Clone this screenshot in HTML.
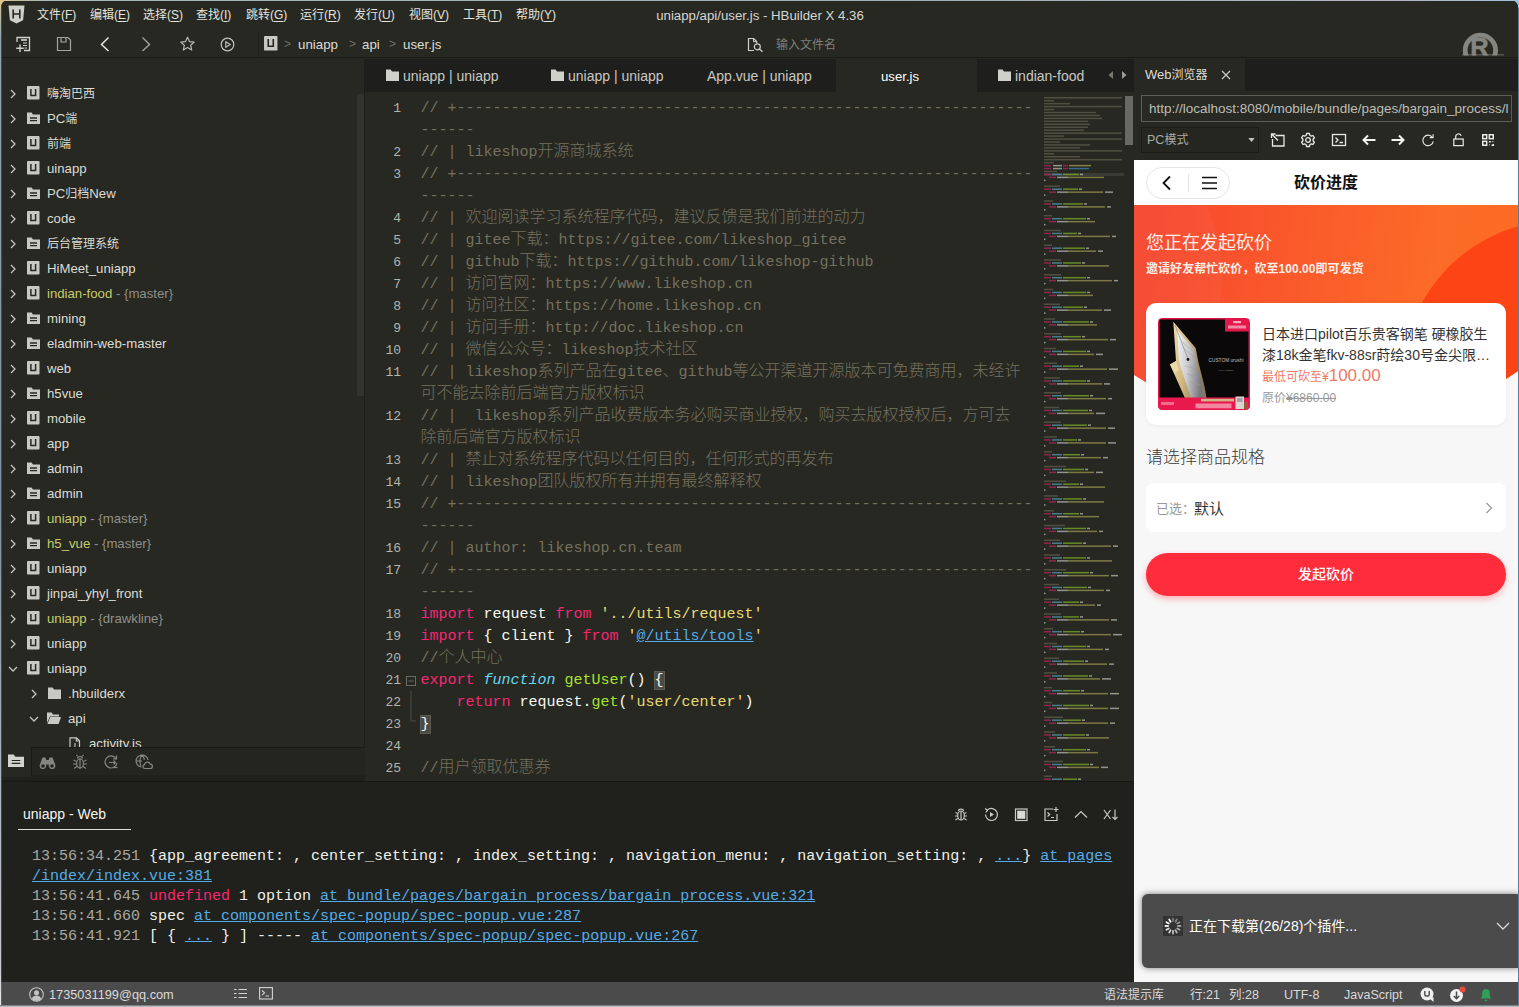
<!DOCTYPE html>
<html lang="zh-CN"><head><meta charset="utf-8"><title>uniapp/api/user.js - HBuilder X 4.36</title>
<style>
*{box-sizing:border-box;margin:0;padding:0}
html,body{width:1519px;height:1007px;overflow:hidden;background:#272822}
body{position:relative;font-family:"Liberation Sans","Noto Sans CJK SC",sans-serif;color:#e0e0da;font-size:13px}
.abs{position:absolute}
svg{display:block}
/* menubar */
#menubar{position:absolute;left:0;top:0;width:1519px;height:30px;background:#272822}
#menubar .mi{position:absolute;top:7px;height:17px;line-height:17px;font-size:12px;color:#e4e4de;white-space:nowrap}
#menubar .mi u{text-decoration:underline;text-underline-offset:2px}
#title{position:absolute;top:7px;left:560px;width:400px;text-align:center;font-size:13.25px;line-height:17px;color:#d6d6d0;white-space:nowrap}
/* toolbar */
#toolbar{position:absolute;left:0;top:30px;width:1519px;height:28px;background:#272822;border-bottom:1px solid #1a1b17}
#toolbar .ic{position:absolute;top:5px}
.crumb{position:absolute;top:6px;font-size:13.3px;line-height:17px;color:#dcdcd6;white-space:nowrap}
.crumb.sep{color:#6e6f68;font-size:12px}
/* sidebar */
#sidebar{position:absolute;left:0;top:59px;width:365px;height:723px;background:#272822;overflow:hidden}
.row{position:absolute;left:0;width:357px;height:25px;line-height:25px;font-size:13.2px;color:#dcdcd4;white-space:nowrap}
.row .ar{position:absolute;top:7px}
.row .icn{position:absolute;top:6px}
.row .tx{position:absolute;top:0}
.row .git{color:#c7cb6a}
.z12{font-size:12px}
.row .br{color:#8f908a}
#sbscroll{position:absolute;left:357px;top:35px;width:7px;height:302px;background:#32332e}
#sbbar{position:absolute;left:0;top:688px;width:365px;height:34px;background:#20211d}
#sbbar .in{position:absolute;left:31px;top:0;width:334px;height:28px;background:#242520;border-top:1px solid #191a16;border-left:1px solid #191a16}
/* editor */
#tabs{position:absolute;left:365px;top:59px;width:769px;height:33px;background:#1e1f1c}
.tab{position:absolute;top:1px;height:33px;line-height:33px;font-size:14px;color:#c8c8c2;white-space:nowrap}
#editor{position:absolute;left:365px;top:92px;width:769px;height:689px;background:#272822;overflow:hidden}
.ln{position:absolute;left:0;width:36px;text-align:right;height:22px;font:13px/22px "Liberation Mono",monospace;color:#b4b4ac}
.cl{position:absolute;left:55.5px;height:22px;line-height:22px;font:15px/22px "Liberation Mono","Noto Sans CJK SC",monospace;color:#f8f8f2;white-space:pre}
.cl .z{line-height:0;font-size:16px;font-family:"Noto Sans CJK SC",sans-serif;font-weight:300}
.c{color:#75715e}.k{color:#f92672}.s{color:#e6db74}.f{color:#a6e22e}.t{color:#66d9ef;font-style:italic}
.lk{color:#55ace6;text-decoration:underline}
.bm{background:#4a4b45;outline:1px solid #5a5b55}
/* console */
#console{position:absolute;left:0;top:781px;width:1134px;height:201px;background:#20211d;border-top:1px solid #171814}
.log{position:absolute;left:32px;height:20px;font:15px/20px "Liberation Mono",monospace;color:#f0f0ea;white-space:pre}
.log .tm{color:#a8a8a2}
.log a{color:#55ace6;text-decoration:underline}
.log .u{color:#f92672}
/* status */
#status{position:absolute;left:0;top:982px;width:1519px;height:25px;background:#4b4b4b;color:#dadada;font-size:13px}
#status span{position:absolute;top:5px;line-height:17px;white-space:nowrap}
/* browser */
#browser{position:absolute;left:1134px;top:59px;width:385px;height:923px;background:#272822}
#btabs{position:absolute;left:0;top:0;width:385px;height:32px;background:#1e1f1c}
#web{position:absolute;left:0;top:101px;width:384px;height:822px;background:#f7f7f7;overflow:hidden;font-family:"Liberation Sans","Noto Sans CJK SC",sans-serif}
</style></head><body>
<div id="menubar"><svg class="abs" style="left:8px;top:5px" width="17" height="19" viewBox="0 0 17 19"><path d="M0.5 0.5h16l-1.4 14.8L8.5 18.5 1.9 15.3z" fill="#cfcfc9"/><path d="M5.2 4.5v9M11.8 4.5v9M5.2 9h6.6" stroke="#272822" stroke-width="1.6" fill="none"/></svg><span class="mi" style="left:37px">文件(<u>F</u>)</span><span class="mi" style="left:90px">编辑(<u>E</u>)</span><span class="mi" style="left:143px">选择(<u>S</u>)</span><span class="mi" style="left:196px">查找(<u>I</u>)</span><span class="mi" style="left:246px">跳转(<u>G</u>)</span><span class="mi" style="left:300px">运行(<u>R</u>)</span><span class="mi" style="left:354px">发行(<u>U</u>)</span><span class="mi" style="left:409px">视图(<u>V</u>)</span><span class="mi" style="left:463px">工具(<u>T</u>)</span><span class="mi" style="left:516px">帮助(<u>Y</u>)</span><div id="title">uniapp/api/user.js - HBuilder X 4.36</div></div>
<div id="toolbar"><svg class="ic" style="left:14px" width="18" height="18" viewBox="0 0 18 18" fill="none" stroke="#d0d0ca" stroke-width="1.3"><path d="M3 7V2.500h12.500v13H10"/><path d="M7 5h6" stroke-width="1.700"/><path d="M9 8h4M9 10.500h4M10.500 13h2.500" stroke-width="1"/><path d="M6 9.500v7.500M2.200 13.200h7.600" stroke-width="1.400"/></svg><svg class="ic" style="left:56px" width="16" height="18" viewBox="0 0 16 18" fill="none" stroke="#a5a6a0" stroke-width="1.2"><path d="M1.5 2.5h10.5l2.5 2.5v10.5h-13z"/><path d="M5 2.5v4.5h5v-4.5"/></svg><svg class="ic" style="left:99px" width="12" height="18" viewBox="0 0 12 18" fill="none" stroke="#e4e4de" stroke-width="1.5"><path d="M9.5 2.5L2.5 9.5l7 6.5"/></svg><svg class="ic" style="left:140px" width="12" height="18" viewBox="0 0 12 18" fill="none" stroke="#a3a49e" stroke-width="1.4"><path d="M2.5 2.5L9.5 9.5l-7 6.5"/></svg><svg class="ic" style="left:179px" width="17" height="18" viewBox="0 0 17 18" fill="none" stroke="#b9b9b3" stroke-width="1.2" stroke-linejoin="round"><path d="M8.5 2.2l2 4.4 4.7.5-3.5 3.2 1 4.7-4.2-2.4-4.2 2.4 1-4.7L1.8 7.1l4.7-.5z"/></svg><svg class="ic" style="left:219px" width="17" height="18" viewBox="0 0 17 18" fill="none" stroke="#c4c4be" stroke-width="1.2"><circle cx="8.5" cy="9.5" r="6.3"/><path d="M6.8 6.8v5.4l4.4-2.7z" stroke-width="1.1"/></svg><div class="abs" style="left:258px;top:1px;width:1px;height:26px;background:#1e1f1b"></div><svg class="abs" style="left:264px;top:6px" width="13.5" height="14.5" viewBox="0 0 12.500 13.500"><rect x="0" y="0" width="12.500" height="13.500" rx=".8" fill="#c9c9c3"/><path d="M3.900 2.900v6.600h4.700V2.900" fill="none" stroke="#272822" stroke-width="1.500"/></svg><span class="crumb sep" style="left:284px">&gt;</span><span class="crumb" style="left:298px">uniapp</span><span class="crumb sep" style="left:349px">&gt;</span><span class="crumb" style="left:362px">api</span><span class="crumb sep" style="left:389px">&gt;</span><span class="crumb" style="left:403px">user.js</span><svg class="abs" style="left:747px;top:7px" width="17" height="17" viewBox="0 0 17 17" fill="none" stroke="#d2d2cc" stroke-width="1.200"><path d="M7 13.500H1.500V1.500h5.200l3 3v1.800"/><path d="M6.500 1.500v3.200h3.200" stroke-width="1"/><circle cx="10.300" cy="9.800" r="3"/><path d="M12.500 12l3 2.800"/></svg><span class="crumb" style="left:776px;top:7px;color:#7f807a;font-size:12px">输入文件名</span><svg class="abs" style="left:1460px;top:0" width="48" height="26" viewBox="0 0 48 26"><defs><clipPath id="rc"><rect x="0" y="0" width="48" height="25.500"/></clipPath></defs><g clip-path="url(#rc)"><circle cx="20.400" cy="20.400" r="15.200" fill="none" stroke="#868681" stroke-width="4.800"/><text x="10.200" y="25.500" font-family="Liberation Sans,sans-serif" font-weight="bold" font-size="25.500" fill="#868681" stroke="#868681" stroke-width=".6">R</text><rect x="2" y="24.500" width="42" height="1" fill="#868681"/></g></svg></div>
<div id="sidebar"><div class="row" style="top:22px"><svg class="ar" style="left:8px;top:8px" width="10" height="10" viewBox="0 0 10 10" fill="none" stroke="#c4c4be" stroke-width="1.3"><path d="M3 1l4 4-4 4"/></svg><svg class="icn" style="left:27px;top:5px" width="12.5" height="13.5" viewBox="0 0 12.500 13.500"><rect x="0" y="0" width="12.500" height="13.500" rx=".8" fill="#c9c9c3"/><path d="M3.900 2.900v6.600h4.700V2.900" fill="none" stroke="#272822" stroke-width="1.500"/></svg><span class="tx" style="left:47px"><span class="z12">嗨淘巴西</span></span></div><div class="row" style="top:47px"><svg class="ar" style="left:8px;top:8px" width="10" height="10" viewBox="0 0 10 10" fill="none" stroke="#c4c4be" stroke-width="1.3"><path d="M3 1l4 4-4 4"/></svg><svg class="icn" style="left:27px;top:6px" width="13" height="12" viewBox="0 0 13 12"><path d="M0 0.5h4.6l1.4 2H13V12H0z" fill="#c9c9c3"/><path d="M3 6h7M3 8.7h7" stroke="#272822" stroke-width="1.3"/></svg><span class="tx" style="left:47px">PC<span class="z12">端</span></span></div><div class="row" style="top:72px"><svg class="ar" style="left:8px;top:8px" width="10" height="10" viewBox="0 0 10 10" fill="none" stroke="#c4c4be" stroke-width="1.3"><path d="M3 1l4 4-4 4"/></svg><svg class="icn" style="left:27px;top:5px" width="12.5" height="13.5" viewBox="0 0 12.500 13.500"><rect x="0" y="0" width="12.500" height="13.500" rx=".8" fill="#c9c9c3"/><path d="M3.900 2.900v6.600h4.700V2.900" fill="none" stroke="#272822" stroke-width="1.500"/></svg><span class="tx" style="left:47px"><span class="z12">前端</span></span></div><div class="row" style="top:97px"><svg class="ar" style="left:8px;top:8px" width="10" height="10" viewBox="0 0 10 10" fill="none" stroke="#c4c4be" stroke-width="1.3"><path d="M3 1l4 4-4 4"/></svg><svg class="icn" style="left:27px;top:5px" width="12.5" height="13.5" viewBox="0 0 12.500 13.500"><rect x="0" y="0" width="12.500" height="13.500" rx=".8" fill="#c9c9c3"/><path d="M3.900 2.900v6.600h4.700V2.900" fill="none" stroke="#272822" stroke-width="1.500"/></svg><span class="tx" style="left:47px">uinapp</span></div><div class="row" style="top:122px"><svg class="ar" style="left:8px;top:8px" width="10" height="10" viewBox="0 0 10 10" fill="none" stroke="#c4c4be" stroke-width="1.3"><path d="M3 1l4 4-4 4"/></svg><svg class="icn" style="left:27px;top:6px" width="13" height="12" viewBox="0 0 13 12"><path d="M0 0.5h4.6l1.4 2H13V12H0z" fill="#c9c9c3"/><path d="M3 6h7M3 8.7h7" stroke="#272822" stroke-width="1.3"/></svg><span class="tx" style="left:47px">PC<span class="z12">归档</span>New</span></div><div class="row" style="top:147px"><svg class="ar" style="left:8px;top:8px" width="10" height="10" viewBox="0 0 10 10" fill="none" stroke="#c4c4be" stroke-width="1.3"><path d="M3 1l4 4-4 4"/></svg><svg class="icn" style="left:27px;top:5px" width="12.5" height="13.5" viewBox="0 0 12.500 13.500"><rect x="0" y="0" width="12.500" height="13.500" rx=".8" fill="#c9c9c3"/><path d="M3.900 2.900v6.600h4.700V2.900" fill="none" stroke="#272822" stroke-width="1.500"/></svg><span class="tx" style="left:47px">code</span></div><div class="row" style="top:172px"><svg class="ar" style="left:8px;top:8px" width="10" height="10" viewBox="0 0 10 10" fill="none" stroke="#c4c4be" stroke-width="1.3"><path d="M3 1l4 4-4 4"/></svg><svg class="icn" style="left:27px;top:6px" width="13" height="12" viewBox="0 0 13 12"><path d="M0 0.5h4.6l1.4 2H13V12H0z" fill="#c9c9c3"/><path d="M3 6h7M3 8.7h7" stroke="#272822" stroke-width="1.3"/></svg><span class="tx" style="left:47px"><span class="z12">后台管理系统</span></span></div><div class="row" style="top:197px"><svg class="ar" style="left:8px;top:8px" width="10" height="10" viewBox="0 0 10 10" fill="none" stroke="#c4c4be" stroke-width="1.3"><path d="M3 1l4 4-4 4"/></svg><svg class="icn" style="left:27px;top:5px" width="12.5" height="13.5" viewBox="0 0 12.500 13.500"><rect x="0" y="0" width="12.500" height="13.500" rx=".8" fill="#c9c9c3"/><path d="M3.900 2.900v6.600h4.700V2.900" fill="none" stroke="#272822" stroke-width="1.500"/></svg><span class="tx" style="left:47px">HiMeet_uniapp</span></div><div class="row" style="top:222px"><svg class="ar" style="left:8px;top:8px" width="10" height="10" viewBox="0 0 10 10" fill="none" stroke="#c4c4be" stroke-width="1.3"><path d="M3 1l4 4-4 4"/></svg><svg class="icn" style="left:27px;top:5px" width="12.5" height="13.5" viewBox="0 0 12.500 13.500"><rect x="0" y="0" width="12.500" height="13.500" rx=".8" fill="#c9c9c3"/><path d="M3.900 2.900v6.600h4.700V2.900" fill="none" stroke="#272822" stroke-width="1.500"/></svg><span class="tx" style="left:47px"><span class="git">indian-food</span><span class="br"> - {master}</span></span></div><div class="row" style="top:247px"><svg class="ar" style="left:8px;top:8px" width="10" height="10" viewBox="0 0 10 10" fill="none" stroke="#c4c4be" stroke-width="1.3"><path d="M3 1l4 4-4 4"/></svg><svg class="icn" style="left:27px;top:6px" width="13" height="12" viewBox="0 0 13 12"><path d="M0 0.5h4.6l1.4 2H13V12H0z" fill="#c9c9c3"/><path d="M3 6h7M3 8.7h7" stroke="#272822" stroke-width="1.3"/></svg><span class="tx" style="left:47px">mining</span></div><div class="row" style="top:272px"><svg class="ar" style="left:8px;top:8px" width="10" height="10" viewBox="0 0 10 10" fill="none" stroke="#c4c4be" stroke-width="1.3"><path d="M3 1l4 4-4 4"/></svg><svg class="icn" style="left:27px;top:6px" width="13" height="12" viewBox="0 0 13 12"><path d="M0 0.5h4.6l1.4 2H13V12H0z" fill="#c9c9c3"/><path d="M3 6h7M3 8.7h7" stroke="#272822" stroke-width="1.3"/></svg><span class="tx" style="left:47px">eladmin-web-master</span></div><div class="row" style="top:297px"><svg class="ar" style="left:8px;top:8px" width="10" height="10" viewBox="0 0 10 10" fill="none" stroke="#c4c4be" stroke-width="1.3"><path d="M3 1l4 4-4 4"/></svg><svg class="icn" style="left:27px;top:5px" width="12.5" height="13.5" viewBox="0 0 12.500 13.500"><rect x="0" y="0" width="12.500" height="13.500" rx=".8" fill="#c9c9c3"/><path d="M3.900 2.900v6.600h4.700V2.900" fill="none" stroke="#272822" stroke-width="1.500"/></svg><span class="tx" style="left:47px">web</span></div><div class="row" style="top:322px"><svg class="ar" style="left:8px;top:8px" width="10" height="10" viewBox="0 0 10 10" fill="none" stroke="#c4c4be" stroke-width="1.3"><path d="M3 1l4 4-4 4"/></svg><svg class="icn" style="left:27px;top:6px" width="13" height="12" viewBox="0 0 13 12"><path d="M0 0.5h4.6l1.4 2H13V12H0z" fill="#c9c9c3"/><path d="M3 6h7M3 8.7h7" stroke="#272822" stroke-width="1.3"/></svg><span class="tx" style="left:47px">h5vue</span></div><div class="row" style="top:347px"><svg class="ar" style="left:8px;top:8px" width="10" height="10" viewBox="0 0 10 10" fill="none" stroke="#c4c4be" stroke-width="1.3"><path d="M3 1l4 4-4 4"/></svg><svg class="icn" style="left:27px;top:5px" width="12.5" height="13.5" viewBox="0 0 12.500 13.500"><rect x="0" y="0" width="12.500" height="13.500" rx=".8" fill="#c9c9c3"/><path d="M3.900 2.900v6.600h4.700V2.900" fill="none" stroke="#272822" stroke-width="1.500"/></svg><span class="tx" style="left:47px">mobile</span></div><div class="row" style="top:372px"><svg class="ar" style="left:8px;top:8px" width="10" height="10" viewBox="0 0 10 10" fill="none" stroke="#c4c4be" stroke-width="1.3"><path d="M3 1l4 4-4 4"/></svg><svg class="icn" style="left:27px;top:5px" width="12.5" height="13.5" viewBox="0 0 12.500 13.500"><rect x="0" y="0" width="12.500" height="13.500" rx=".8" fill="#c9c9c3"/><path d="M3.900 2.900v6.600h4.700V2.900" fill="none" stroke="#272822" stroke-width="1.500"/></svg><span class="tx" style="left:47px">app</span></div><div class="row" style="top:397px"><svg class="ar" style="left:8px;top:8px" width="10" height="10" viewBox="0 0 10 10" fill="none" stroke="#c4c4be" stroke-width="1.3"><path d="M3 1l4 4-4 4"/></svg><svg class="icn" style="left:27px;top:6px" width="13" height="12" viewBox="0 0 13 12"><path d="M0 0.5h4.6l1.4 2H13V12H0z" fill="#c9c9c3"/><path d="M3 6h7M3 8.7h7" stroke="#272822" stroke-width="1.3"/></svg><span class="tx" style="left:47px">admin</span></div><div class="row" style="top:422px"><svg class="ar" style="left:8px;top:8px" width="10" height="10" viewBox="0 0 10 10" fill="none" stroke="#c4c4be" stroke-width="1.3"><path d="M3 1l4 4-4 4"/></svg><svg class="icn" style="left:27px;top:6px" width="13" height="12" viewBox="0 0 13 12"><path d="M0 0.5h4.6l1.4 2H13V12H0z" fill="#c9c9c3"/><path d="M3 6h7M3 8.7h7" stroke="#272822" stroke-width="1.3"/></svg><span class="tx" style="left:47px">admin</span></div><div class="row" style="top:447px"><svg class="ar" style="left:8px;top:8px" width="10" height="10" viewBox="0 0 10 10" fill="none" stroke="#c4c4be" stroke-width="1.3"><path d="M3 1l4 4-4 4"/></svg><svg class="icn" style="left:27px;top:5px" width="12.5" height="13.5" viewBox="0 0 12.500 13.500"><rect x="0" y="0" width="12.500" height="13.500" rx=".8" fill="#c9c9c3"/><path d="M3.900 2.900v6.600h4.700V2.900" fill="none" stroke="#272822" stroke-width="1.500"/></svg><span class="tx" style="left:47px"><span class="git">uniapp</span><span class="br"> - {master}</span></span></div><div class="row" style="top:472px"><svg class="ar" style="left:8px;top:8px" width="10" height="10" viewBox="0 0 10 10" fill="none" stroke="#c4c4be" stroke-width="1.3"><path d="M3 1l4 4-4 4"/></svg><svg class="icn" style="left:27px;top:6px" width="13" height="12" viewBox="0 0 13 12"><path d="M0 0.5h4.6l1.4 2H13V12H0z" fill="#c9c9c3"/><path d="M3 6h7M3 8.7h7" stroke="#272822" stroke-width="1.3"/></svg><span class="tx" style="left:47px"><span class="git">h5_vue</span><span class="br"> - {master}</span></span></div><div class="row" style="top:497px"><svg class="ar" style="left:8px;top:8px" width="10" height="10" viewBox="0 0 10 10" fill="none" stroke="#c4c4be" stroke-width="1.3"><path d="M3 1l4 4-4 4"/></svg><svg class="icn" style="left:27px;top:5px" width="12.5" height="13.5" viewBox="0 0 12.500 13.500"><rect x="0" y="0" width="12.500" height="13.500" rx=".8" fill="#c9c9c3"/><path d="M3.900 2.900v6.600h4.700V2.900" fill="none" stroke="#272822" stroke-width="1.500"/></svg><span class="tx" style="left:47px">uniapp</span></div><div class="row" style="top:522px"><svg class="ar" style="left:8px;top:8px" width="10" height="10" viewBox="0 0 10 10" fill="none" stroke="#c4c4be" stroke-width="1.3"><path d="M3 1l4 4-4 4"/></svg><svg class="icn" style="left:27px;top:5px" width="12.5" height="13.5" viewBox="0 0 12.500 13.500"><rect x="0" y="0" width="12.500" height="13.500" rx=".8" fill="#c9c9c3"/><path d="M3.900 2.900v6.600h4.700V2.900" fill="none" stroke="#272822" stroke-width="1.500"/></svg><span class="tx" style="left:47px">jinpai_yhyl_front</span></div><div class="row" style="top:547px"><svg class="ar" style="left:8px;top:8px" width="10" height="10" viewBox="0 0 10 10" fill="none" stroke="#c4c4be" stroke-width="1.3"><path d="M3 1l4 4-4 4"/></svg><svg class="icn" style="left:27px;top:5px" width="12.5" height="13.5" viewBox="0 0 12.500 13.500"><rect x="0" y="0" width="12.500" height="13.500" rx=".8" fill="#c9c9c3"/><path d="M3.900 2.900v6.600h4.700V2.900" fill="none" stroke="#272822" stroke-width="1.500"/></svg><span class="tx" style="left:47px"><span class="git">uniapp</span><span class="br"> - {drawkline}</span></span></div><div class="row" style="top:572px"><svg class="ar" style="left:8px;top:8px" width="10" height="10" viewBox="0 0 10 10" fill="none" stroke="#c4c4be" stroke-width="1.3"><path d="M3 1l4 4-4 4"/></svg><svg class="icn" style="left:27px;top:5px" width="12.5" height="13.5" viewBox="0 0 12.500 13.500"><rect x="0" y="0" width="12.500" height="13.500" rx=".8" fill="#c9c9c3"/><path d="M3.900 2.900v6.600h4.700V2.900" fill="none" stroke="#272822" stroke-width="1.500"/></svg><span class="tx" style="left:47px">uniapp</span></div><div class="row" style="top:597px"><svg class="ar" style="left:8px;top:8px" width="10" height="10" viewBox="0 0 10 10" fill="none" stroke="#c4c4be" stroke-width="1.3"><path d="M1 3l4 4 4-4"/></svg><svg class="icn" style="left:27px;top:5px" width="12.5" height="13.5" viewBox="0 0 12.500 13.500"><rect x="0" y="0" width="12.500" height="13.500" rx=".8" fill="#c9c9c3"/><path d="M3.900 2.900v6.600h4.700V2.900" fill="none" stroke="#272822" stroke-width="1.500"/></svg><span class="tx" style="left:47px">uniapp</span></div><div class="row" style="top:622px"><svg class="ar" style="left:29px;top:8px" width="10" height="10" viewBox="0 0 10 10" fill="none" stroke="#c4c4be" stroke-width="1.3"><path d="M3 1l4 4-4 4"/></svg><svg class="icn" style="left:48px;top:6px" width="13" height="12" viewBox="0 0 13 12"><path d="M0 0.5h4.6l1.4 2H13V12H0z" fill="#c9c9c3"/></svg><span class="tx" style="left:68px">.hbuilderx</span></div><div class="row" style="top:647px"><svg class="ar" style="left:29px;top:8px" width="10" height="10" viewBox="0 0 10 10" fill="none" stroke="#c4c4be" stroke-width="1.3"><path d="M1 3l4 4 4-4"/></svg><svg class="icn" style="left:47px;top:6px" width="14" height="12" viewBox="0 0 14 12"><path d="M0 11V0.5h4.6l1.4 2H12v2H3z" fill="#c9c9c3"/><path d="M3.3 5H14l-2.4 7H0.4z" fill="#c9c9c3"/></svg><span class="tx" style="left:68px">api</span></div><div class="row" style="top:672px"><svg class="icn" style="left:69px;top:6px" width="12" height="13" viewBox="0 0 12 13" fill="none" stroke="#c9c9c3" stroke-width="1.2"><path d="M1 0.8h6.5l3 3V12.3H1z"/><path d="M7.3 1v3h3"/><path d="M6 6v3.2c0 .8-.5 1.2-1.3 1.2" stroke-width="1.1"/></svg><span class="tx" style="left:89px">activity.js</span></div><div id="sbscroll"></div><div class="abs" style="left:364px;top:0;width:1px;height:722px;background:#1e1f1b"></div><div id="sbbar"><div class="in"></div><div class="abs" style="left:0;top:0;width:31px;height:30px;background:#272822"></div><svg class="abs" style="left:8px;top:7px" width="16" height="13" viewBox="0 0 13 12" preserveAspectRatio="none"><path d="M0 0.5h4.6l1.4 2H13V12H0z" fill="#d4d4ce"/><path d="M3 6h7M3 8.7h7" stroke="#272822" stroke-width="1.1"/></svg><svg class="abs" style="left:39px;top:9px" width="17" height="14" viewBox="0 0 17 14"><path d="M3.500 1.500h3l.8 2.500h2.400l.8-2.500h3l2.800 7.500a3.300 3.300 0 1 1-6.500.8v-1.300H7.200v1.300a3.300 3.300 0 1 1-6.500-.8z" fill="#85867f"/><circle cx="4" cy="10" r="1.800" fill="#242520"/><circle cx="13" cy="10" r="1.800" fill="#242520"/></svg><svg class="abs" style="left:72px;top:7px" width="16" height="16" viewBox="0 0 16 16" fill="none" stroke="#85867f" stroke-width="1.2"><ellipse cx="8" cy="9.5" rx="3.4" ry="4.6"/><path d="M8 5v9M5.5 4.5C5.5 2 10.500 2 10.500 4.500M4.600 7.500L1.500 6M4.600 10H1M4.800 12.500L2 14.500M11.400 7.500l3.100-1.500M11.400 10H15M11.200 12.500L14 14.500M5.500 2L4.500 1M10.500 2l1-1"/></svg><svg class="abs" style="left:103px;top:7px" width="17" height="16" viewBox="0 0 17 16" fill="none" stroke="#85867f" stroke-width="1.2"><path d="M13 4.500A6 6 0 1 0 14 9"/><path d="M13.500 1.500v3.300h-3.300"/><path d="M6 8.500h6.500M10.500 6.500l2 2-2 2"/><path d="M9.500 13.500h5" /></svg><svg class="abs" style="left:135px;top:7px" width="18" height="16" viewBox="0 0 18 16" fill="none" stroke="#85867f" stroke-width="1.2"><path d="M6.500 13A6 6 0 1 1 13 6"/><path d="M1 7h6M7 1C4.500 3.500 4.500 9 6 12M7 1c1.500 1.500 2.300 3.500 2.300 5"/><path d="M9.500 14.500h5.500a2.200 2.200 0 0 0 .3-4.400a3 3 0 0 0-5.800.5a2 2 0 0 0 0 3.900z"/></svg></div></div>
<div id="tabs"><svg class="abs" style="left:21px;top:10px" width="13" height="12" viewBox="0 0 13 12"><path d="M0 0.5h4.6l1.4 2H13V12H0z" fill="#d0d0ca"/></svg><span class="tab" style="left:38px">uniapp | uniapp</span><svg class="abs" style="left:186px;top:10px" width="13" height="12" viewBox="0 0 13 12"><path d="M0 0.5h4.6l1.4 2H13V12H0z" fill="#d0d0ca"/></svg><span class="tab" style="left:203px">uniapp | uniapp</span><span class="tab" style="left:342px">App.vue | uniapp</span><div class="abs" style="left:471px;top:0;width:141px;height:33px;background:#272822"></div><span class="tab" style="left:516px;font-size:13.200px;color:#ffffff">user.js</span><svg class="abs" style="left:633px;top:10px" width="13" height="12" viewBox="0 0 13 12"><path d="M0 0.5h4.6l1.4 2H13V12H0z" fill="#d0d0ca"/></svg><span class="tab" style="left:650px">indian-food</span><div class="abs" style="left:737px;top:0;width:32px;height:33px;background:#1e1f1c"></div><svg class="abs" style="left:742px;top:11px" width="22" height="10" viewBox="0 0 22 10"><path d="M6 1v8L1.500 5z" fill="#77786f"/><path d="M15 1v8l4.500-4z" fill="#9a9b93"/></svg></div>
<div id="editor"><div class="ln" style="top:6px">1</div><div class="cl" style="top:6px"><span class="c">// +----------------------------------------------------------------</span></div><div class="cl" style="top:28px"><span class="c">------</span></div><div class="ln" style="top:50px">2</div><div class="cl" style="top:50px"><span class="c">// | likeshop<span class="z">开源商城系统</span></span></div><div class="ln" style="top:72px">3</div><div class="cl" style="top:72px"><span class="c">// +----------------------------------------------------------------</span></div><div class="cl" style="top:94px"><span class="c">------</span></div><div class="ln" style="top:116px">4</div><div class="cl" style="top:116px"><span class="c">// | <span class="z">欢迎阅读学习系统程序代码，建议反馈是我们前进的动力</span></span></div><div class="ln" style="top:138px">5</div><div class="cl" style="top:138px"><span class="c">// | gitee<span class="z">下载：</span>https://gitee.com/likeshop_gitee</span></div><div class="ln" style="top:160px">6</div><div class="cl" style="top:160px"><span class="c">// | github<span class="z">下载：</span>https://github.com/likeshop-github</span></div><div class="ln" style="top:182px">7</div><div class="cl" style="top:182px"><span class="c">// | <span class="z">访问官网：</span>https://www.likeshop.cn</span></div><div class="ln" style="top:204px">8</div><div class="cl" style="top:204px"><span class="c">// | <span class="z">访问社区：</span>https://home.likeshop.cn</span></div><div class="ln" style="top:226px">9</div><div class="cl" style="top:226px"><span class="c">// | <span class="z">访问手册：</span>http://doc.likeshop.cn</span></div><div class="ln" style="top:248px">10</div><div class="cl" style="top:248px"><span class="c">// | <span class="z">微信公众号：</span>likeshop<span class="z">技术社区</span></span></div><div class="ln" style="top:270px">11</div><div class="cl" style="top:270px"><span class="c">// | likeshop<span class="z">系列产品在</span>gitee<span class="z">、</span>github<span class="z">等公开渠道开源版本可免费商用，未经许</span></span></div><div class="cl" style="top:292px"><span class="c"><span class="z">可不能去除前后端官方版权标识</span></span></div><div class="ln" style="top:314px">12</div><div class="cl" style="top:314px"><span class="c">// |  likeshop<span class="z">系列产品收费版本务必购买商业授权，购买去版权授权后，方可去</span></span></div><div class="cl" style="top:336px"><span class="c"><span class="z">除前后端官方版权标识</span></span></div><div class="ln" style="top:358px">13</div><div class="cl" style="top:358px"><span class="c">// | <span class="z">禁止对系统程序代码以任何目的，任何形式的再发布</span></span></div><div class="ln" style="top:380px">14</div><div class="cl" style="top:380px"><span class="c">// | likeshop<span class="z">团队版权所有并拥有最终解释权</span></span></div><div class="ln" style="top:402px">15</div><div class="cl" style="top:402px"><span class="c">// +----------------------------------------------------------------</span></div><div class="cl" style="top:424px"><span class="c">------</span></div><div class="ln" style="top:446px">16</div><div class="cl" style="top:446px"><span class="c">// | author: likeshop.cn.team</span></div><div class="ln" style="top:468px">17</div><div class="cl" style="top:468px"><span class="c">// +----------------------------------------------------------------</span></div><div class="cl" style="top:490px"><span class="c">------</span></div><div class="ln" style="top:512px">18</div><div class="cl" style="top:512px"><span class="k">import</span> request <span class="k">from</span> <span class="s">'../utils/request'</span></div><div class="ln" style="top:534px">19</div><div class="cl" style="top:534px"><span class="k">import</span> { client } <span class="k">from</span> <span class="s">'</span><span class="lk">@/utils/tools</span><span class="s">'</span></div><div class="ln" style="top:556px">20</div><div class="cl" style="top:556px"><span class="c">//<span class="z">个人中心</span></span></div><div class="ln" style="top:578px">21</div><div class="cl" style="top:578px"><span class="k">export</span> <span class="t">function</span> <span class="f">getUser</span>() <span class="bm">{</span></div><div class="ln" style="top:600px">22</div><div class="cl" style="top:600px">    <span class="k">return</span> request.<span class="f">get</span>(<span class="s">'user/center'</span>)</div><div class="ln" style="top:622px">23</div><div class="cl" style="top:622px"><span class="bm">}</span></div><div class="ln" style="top:644px">24</div><div class="ln" style="top:666px">25</div><div class="cl" style="top:666px"><span class="c">//<span class="z">用户领取优惠券</span></span></div><svg class="abs" style="left:41px;top:584px" width="10" height="52" viewBox="0 0 10 52" fill="none" stroke="#6a6b64" stroke-width="1"><rect x="0.5" y="0.5" width="9" height="9"/><path d="M2.500 5h5"/><path d="M5 15v30h5" stroke="#4c4d47"/></svg><svg class="abs" style="left:679px;top:4px" width="84" height="685" viewBox="0 0 84 685"><rect x="0" y="1.00" width="78" height="1.500" fill="#6b6856" opacity="0.61"/><rect x="0" y="3.95" width="10" height="1.500" fill="#6b6856" opacity="0.61"/><rect x="0" y="6.90" width="26" height="1.500" fill="#6b6856" opacity="0.61"/><rect x="0" y="9.85" width="78" height="1.500" fill="#6b6856" opacity="0.61"/><rect x="0" y="12.80" width="10" height="1.500" fill="#6b6856" opacity="0.61"/><rect x="0" y="15.75" width="52" height="1.500" fill="#6b6856" opacity="0.61"/><rect x="0" y="18.70" width="56" height="1.500" fill="#6b6856" opacity="0.61"/><rect x="0" y="21.65" width="58" height="1.500" fill="#6b6856" opacity="0.61"/><rect x="0" y="24.60" width="44" height="1.500" fill="#6b6856" opacity="0.61"/><rect x="0" y="27.55" width="46" height="1.500" fill="#6b6856" opacity="0.61"/><rect x="0" y="30.50" width="44" height="1.500" fill="#6b6856" opacity="0.61"/><rect x="0" y="33.45" width="40" height="1.500" fill="#6b6856" opacity="0.61"/><rect x="0" y="36.40" width="78" height="1.500" fill="#6b6856" opacity="0.61"/><rect x="0" y="39.35" width="20" height="1.500" fill="#6b6856" opacity="0.61"/><rect x="0" y="42.30" width="78" height="1.500" fill="#6b6856" opacity="0.61"/><rect x="0" y="45.25" width="16" height="1.500" fill="#6b6856" opacity="0.61"/><rect x="0" y="48.20" width="46" height="1.500" fill="#6b6856" opacity="0.61"/><rect x="0" y="51.15" width="36" height="1.500" fill="#6b6856" opacity="0.61"/><rect x="0" y="54.10" width="78" height="1.500" fill="#6b6856" opacity="0.61"/><rect x="0" y="57.05" width="10" height="1.500" fill="#6b6856" opacity="0.61"/><rect x="0" y="60.00" width="36" height="1.500" fill="#6b6856" opacity="0.61"/><rect x="0" y="62.95" width="78" height="1.500" fill="#6b6856" opacity="0.61"/><rect x="0" y="65.90" width="10" height="1.500" fill="#6b6856" opacity="0.61"/><rect x="0" y="68.85" width="7" height="1.500" fill="#c02560" opacity="0.68"/><rect x="9" y="68.85" width="9" height="1.500" fill="#c8c8c2" opacity="0.68"/><rect x="19" y="68.85" width="5" height="1.500" fill="#c02560" opacity="0.68"/><rect x="25" y="68.85" width="22" height="1.500" fill="#b5ad5c" opacity="0.68"/><rect x="0" y="71.80" width="7" height="1.500" fill="#c02560" opacity="0.68"/><rect x="9" y="71.80" width="9" height="1.500" fill="#c8c8c2" opacity="0.68"/><rect x="19" y="71.80" width="5" height="1.500" fill="#c02560" opacity="0.68"/><rect x="25" y="71.80" width="20" height="1.500" fill="#3f8fc0" opacity="0.68"/><rect x="0" y="77.00" width="80" height="3" fill="#3b3c36"/><rect x="0" y="74.75" width="13" height="1.500" fill="#6b6856" opacity="0.61"/><rect x="0" y="77.70" width="7" height="1.500" fill="#c02560" opacity="0.68"/><rect x="8" y="77.70" width="10" height="1.500" fill="#4fa9bd" opacity="0.68"/><rect x="19" y="77.70" width="16" height="1.500" fill="#86b82a" opacity="0.68"/><rect x="36" y="77.70" width="3" height="1.500" fill="#c8c8c2" opacity="0.68"/><rect x="5" y="80.65" width="7" height="1.500" fill="#c02560" opacity="0.68"/><rect x="13" y="80.65" width="11" height="1.500" fill="#c8c8c2" opacity="0.68"/><rect x="24" y="80.65" width="36" height="1.500" fill="#a7a055" opacity="0.68"/><rect x="0" y="83.60" width="1.5" height="1.500" fill="#c8c8c2" opacity="0.68"/><rect x="0" y="89.50" width="16" height="1.500" fill="#6b6856" opacity="0.61"/><rect x="0" y="92.45" width="7" height="1.500" fill="#c02560" opacity="0.68"/><rect x="8" y="92.45" width="10" height="1.500" fill="#4fa9bd" opacity="0.68"/><rect x="19" y="92.45" width="15" height="1.500" fill="#86b82a" opacity="0.68"/><rect x="35" y="92.45" width="3" height="1.500" fill="#c8c8c2" opacity="0.68"/><rect x="5" y="95.40" width="7" height="1.500" fill="#c02560" opacity="0.68"/><rect x="13" y="95.40" width="11" height="1.500" fill="#c8c8c2" opacity="0.68"/><rect x="24" y="95.40" width="35" height="1.500" fill="#a7a055" opacity="0.68"/><rect x="61" y="95.40" width="8" height="1.500" fill="#c8c8c2" opacity="0.68"/><rect x="0" y="98.35" width="1.5" height="1.500" fill="#c8c8c2" opacity="0.68"/><rect x="0" y="104.25" width="9" height="1.500" fill="#6b6856" opacity="0.61"/><rect x="0" y="107.20" width="7" height="1.500" fill="#c02560" opacity="0.68"/><rect x="8" y="107.20" width="10" height="1.500" fill="#4fa9bd" opacity="0.68"/><rect x="19" y="107.20" width="20" height="1.500" fill="#86b82a" opacity="0.68"/><rect x="40" y="107.20" width="3" height="1.500" fill="#c8c8c2" opacity="0.68"/><rect x="5" y="110.15" width="7" height="1.500" fill="#c02560" opacity="0.68"/><rect x="13" y="110.15" width="11" height="1.500" fill="#c8c8c2" opacity="0.68"/><rect x="24" y="110.15" width="37" height="1.500" fill="#a7a055" opacity="0.68"/><rect x="63" y="110.15" width="4" height="1.500" fill="#c8c8c2" opacity="0.68"/><rect x="0" y="113.10" width="1.5" height="1.500" fill="#c8c8c2" opacity="0.68"/><rect x="0" y="119.00" width="8" height="1.500" fill="#6b6856" opacity="0.61"/><rect x="0" y="121.95" width="7" height="1.500" fill="#c02560" opacity="0.68"/><rect x="8" y="121.95" width="10" height="1.500" fill="#4fa9bd" opacity="0.68"/><rect x="19" y="121.95" width="23" height="1.500" fill="#86b82a" opacity="0.68"/><rect x="43" y="121.95" width="3" height="1.500" fill="#c8c8c2" opacity="0.68"/><rect x="5" y="124.90" width="7" height="1.500" fill="#c02560" opacity="0.68"/><rect x="13" y="124.90" width="11" height="1.500" fill="#c8c8c2" opacity="0.68"/><rect x="24" y="124.90" width="27" height="1.500" fill="#a7a055" opacity="0.68"/><rect x="0" y="127.85" width="1.5" height="1.500" fill="#c8c8c2" opacity="0.68"/><rect x="0" y="133.75" width="17" height="1.500" fill="#6b6856" opacity="0.61"/><rect x="0" y="136.70" width="7" height="1.500" fill="#c02560" opacity="0.68"/><rect x="8" y="136.70" width="10" height="1.500" fill="#4fa9bd" opacity="0.68"/><rect x="19" y="136.70" width="14" height="1.500" fill="#86b82a" opacity="0.68"/><rect x="34" y="136.70" width="3" height="1.500" fill="#c8c8c2" opacity="0.68"/><rect x="5" y="139.65" width="7" height="1.500" fill="#c02560" opacity="0.68"/><rect x="13" y="139.65" width="11" height="1.500" fill="#c8c8c2" opacity="0.68"/><rect x="24" y="139.65" width="42" height="1.500" fill="#a7a055" opacity="0.68"/><rect x="68" y="139.65" width="4" height="1.500" fill="#c8c8c2" opacity="0.68"/><rect x="0" y="142.60" width="1.5" height="1.500" fill="#c8c8c2" opacity="0.68"/><rect x="0" y="148.50" width="8" height="1.500" fill="#6b6856" opacity="0.61"/><rect x="0" y="151.45" width="7" height="1.500" fill="#c02560" opacity="0.68"/><rect x="8" y="151.45" width="10" height="1.500" fill="#4fa9bd" opacity="0.68"/><rect x="19" y="151.45" width="22" height="1.500" fill="#86b82a" opacity="0.68"/><rect x="42" y="151.45" width="3" height="1.500" fill="#c8c8c2" opacity="0.68"/><rect x="5" y="154.40" width="7" height="1.500" fill="#c02560" opacity="0.68"/><rect x="13" y="154.40" width="11" height="1.500" fill="#c8c8c2" opacity="0.68"/><rect x="24" y="154.40" width="28" height="1.500" fill="#a7a055" opacity="0.68"/><rect x="54" y="154.40" width="5" height="1.500" fill="#c8c8c2" opacity="0.68"/><rect x="0" y="157.35" width="1.5" height="1.500" fill="#c8c8c2" opacity="0.68"/><rect x="0" y="163.25" width="17" height="1.500" fill="#6b6856" opacity="0.61"/><rect x="0" y="166.20" width="7" height="1.500" fill="#c02560" opacity="0.68"/><rect x="8" y="166.20" width="10" height="1.500" fill="#4fa9bd" opacity="0.68"/><rect x="19" y="166.20" width="18" height="1.500" fill="#86b82a" opacity="0.68"/><rect x="38" y="166.20" width="3" height="1.500" fill="#c8c8c2" opacity="0.68"/><rect x="5" y="169.15" width="7" height="1.500" fill="#c02560" opacity="0.68"/><rect x="13" y="169.15" width="11" height="1.500" fill="#c8c8c2" opacity="0.68"/><rect x="24" y="169.15" width="41" height="1.500" fill="#a7a055" opacity="0.68"/><rect x="0" y="172.10" width="1.5" height="1.500" fill="#c8c8c2" opacity="0.68"/><rect x="0" y="178.00" width="17" height="1.500" fill="#6b6856" opacity="0.61"/><rect x="0" y="180.95" width="7" height="1.500" fill="#c02560" opacity="0.68"/><rect x="8" y="180.95" width="10" height="1.500" fill="#4fa9bd" opacity="0.68"/><rect x="19" y="180.95" width="23" height="1.500" fill="#86b82a" opacity="0.68"/><rect x="43" y="180.95" width="3" height="1.500" fill="#c8c8c2" opacity="0.68"/><rect x="5" y="183.90" width="7" height="1.500" fill="#c02560" opacity="0.68"/><rect x="13" y="183.90" width="11" height="1.500" fill="#c8c8c2" opacity="0.68"/><rect x="24" y="183.90" width="44" height="1.500" fill="#a7a055" opacity="0.68"/><rect x="70" y="183.90" width="4" height="1.500" fill="#c8c8c2" opacity="0.68"/><rect x="0" y="186.85" width="1.5" height="1.500" fill="#c8c8c2" opacity="0.68"/><rect x="0" y="192.75" width="9" height="1.500" fill="#6b6856" opacity="0.61"/><rect x="0" y="195.70" width="7" height="1.500" fill="#c02560" opacity="0.68"/><rect x="8" y="195.70" width="10" height="1.500" fill="#4fa9bd" opacity="0.68"/><rect x="19" y="195.70" width="23" height="1.500" fill="#86b82a" opacity="0.68"/><rect x="43" y="195.70" width="3" height="1.500" fill="#c8c8c2" opacity="0.68"/><rect x="5" y="198.65" width="7" height="1.500" fill="#c02560" opacity="0.68"/><rect x="13" y="198.65" width="11" height="1.500" fill="#c8c8c2" opacity="0.68"/><rect x="24" y="198.65" width="25" height="1.500" fill="#a7a055" opacity="0.68"/><rect x="0" y="201.60" width="1.5" height="1.500" fill="#c8c8c2" opacity="0.68"/><rect x="0" y="207.50" width="16" height="1.500" fill="#6b6856" opacity="0.61"/><rect x="0" y="210.45" width="7" height="1.500" fill="#c02560" opacity="0.68"/><rect x="8" y="210.45" width="10" height="1.500" fill="#4fa9bd" opacity="0.68"/><rect x="19" y="210.45" width="20" height="1.500" fill="#86b82a" opacity="0.68"/><rect x="40" y="210.45" width="3" height="1.500" fill="#c8c8c2" opacity="0.68"/><rect x="5" y="213.40" width="7" height="1.500" fill="#c02560" opacity="0.68"/><rect x="13" y="213.40" width="11" height="1.500" fill="#c8c8c2" opacity="0.68"/><rect x="24" y="213.40" width="34" height="1.500" fill="#a7a055" opacity="0.68"/><rect x="60" y="213.40" width="7" height="1.500" fill="#c8c8c2" opacity="0.68"/><rect x="0" y="216.35" width="1.5" height="1.500" fill="#c8c8c2" opacity="0.68"/><rect x="0" y="222.25" width="11" height="1.500" fill="#6b6856" opacity="0.61"/><rect x="0" y="225.20" width="7" height="1.500" fill="#c02560" opacity="0.68"/><rect x="8" y="225.20" width="10" height="1.500" fill="#4fa9bd" opacity="0.68"/><rect x="19" y="225.20" width="26" height="1.500" fill="#86b82a" opacity="0.68"/><rect x="46" y="225.20" width="3" height="1.500" fill="#c8c8c2" opacity="0.68"/><rect x="5" y="228.15" width="7" height="1.500" fill="#c02560" opacity="0.68"/><rect x="13" y="228.15" width="11" height="1.500" fill="#c8c8c2" opacity="0.68"/><rect x="24" y="228.15" width="29" height="1.500" fill="#a7a055" opacity="0.68"/><rect x="0" y="231.10" width="1.5" height="1.500" fill="#c8c8c2" opacity="0.68"/><rect x="0" y="237.00" width="17" height="1.500" fill="#6b6856" opacity="0.61"/><rect x="0" y="239.95" width="7" height="1.500" fill="#c02560" opacity="0.68"/><rect x="8" y="239.95" width="10" height="1.500" fill="#4fa9bd" opacity="0.68"/><rect x="19" y="239.95" width="18" height="1.500" fill="#86b82a" opacity="0.68"/><rect x="38" y="239.95" width="3" height="1.500" fill="#c8c8c2" opacity="0.68"/><rect x="5" y="242.90" width="7" height="1.500" fill="#c02560" opacity="0.68"/><rect x="13" y="242.90" width="11" height="1.500" fill="#c8c8c2" opacity="0.68"/><rect x="24" y="242.90" width="40" height="1.500" fill="#a7a055" opacity="0.68"/><rect x="66" y="242.90" width="6" height="1.500" fill="#c8c8c2" opacity="0.68"/><rect x="0" y="245.85" width="1.5" height="1.500" fill="#c8c8c2" opacity="0.68"/><rect x="0" y="251.75" width="12" height="1.500" fill="#6b6856" opacity="0.61"/><rect x="0" y="254.70" width="7" height="1.500" fill="#c02560" opacity="0.68"/><rect x="8" y="254.70" width="10" height="1.500" fill="#4fa9bd" opacity="0.68"/><rect x="19" y="254.70" width="23" height="1.500" fill="#86b82a" opacity="0.68"/><rect x="43" y="254.70" width="3" height="1.500" fill="#c8c8c2" opacity="0.68"/><rect x="5" y="257.65" width="7" height="1.500" fill="#c02560" opacity="0.68"/><rect x="13" y="257.65" width="11" height="1.500" fill="#c8c8c2" opacity="0.68"/><rect x="24" y="257.65" width="26" height="1.500" fill="#a7a055" opacity="0.68"/><rect x="52" y="257.65" width="7" height="1.500" fill="#c8c8c2" opacity="0.68"/><rect x="0" y="260.60" width="1.5" height="1.500" fill="#c8c8c2" opacity="0.68"/><rect x="0" y="266.50" width="13" height="1.500" fill="#6b6856" opacity="0.61"/><rect x="0" y="269.45" width="7" height="1.500" fill="#c02560" opacity="0.68"/><rect x="8" y="269.45" width="10" height="1.500" fill="#4fa9bd" opacity="0.68"/><rect x="19" y="269.45" width="16" height="1.500" fill="#86b82a" opacity="0.68"/><rect x="36" y="269.45" width="3" height="1.500" fill="#c8c8c2" opacity="0.68"/><rect x="5" y="272.40" width="7" height="1.500" fill="#c02560" opacity="0.68"/><rect x="13" y="272.40" width="11" height="1.500" fill="#c8c8c2" opacity="0.68"/><rect x="24" y="272.40" width="39" height="1.500" fill="#a7a055" opacity="0.68"/><rect x="65" y="272.40" width="9" height="1.500" fill="#c8c8c2" opacity="0.68"/><rect x="0" y="275.35" width="1.5" height="1.500" fill="#c8c8c2" opacity="0.68"/><rect x="0" y="281.25" width="16" height="1.500" fill="#6b6856" opacity="0.61"/><rect x="0" y="284.20" width="7" height="1.500" fill="#c02560" opacity="0.68"/><rect x="8" y="284.20" width="10" height="1.500" fill="#4fa9bd" opacity="0.68"/><rect x="19" y="284.20" width="23" height="1.500" fill="#86b82a" opacity="0.68"/><rect x="43" y="284.20" width="3" height="1.500" fill="#c8c8c2" opacity="0.68"/><rect x="5" y="287.15" width="7" height="1.500" fill="#c02560" opacity="0.68"/><rect x="13" y="287.15" width="11" height="1.500" fill="#c8c8c2" opacity="0.68"/><rect x="24" y="287.15" width="34" height="1.500" fill="#a7a055" opacity="0.68"/><rect x="60" y="287.15" width="6" height="1.500" fill="#c8c8c2" opacity="0.68"/><rect x="0" y="290.10" width="1.5" height="1.500" fill="#c8c8c2" opacity="0.68"/><rect x="0" y="296.00" width="17" height="1.500" fill="#6b6856" opacity="0.61"/><rect x="0" y="298.95" width="7" height="1.500" fill="#c02560" opacity="0.68"/><rect x="8" y="298.95" width="10" height="1.500" fill="#4fa9bd" opacity="0.68"/><rect x="19" y="298.95" width="26" height="1.500" fill="#86b82a" opacity="0.68"/><rect x="46" y="298.95" width="3" height="1.500" fill="#c8c8c2" opacity="0.68"/><rect x="5" y="301.90" width="7" height="1.500" fill="#c02560" opacity="0.68"/><rect x="13" y="301.90" width="11" height="1.500" fill="#c8c8c2" opacity="0.68"/><rect x="24" y="301.90" width="38" height="1.500" fill="#a7a055" opacity="0.68"/><rect x="64" y="301.90" width="4" height="1.500" fill="#c8c8c2" opacity="0.68"/><rect x="0" y="304.85" width="1.5" height="1.500" fill="#c8c8c2" opacity="0.68"/><rect x="0" y="310.75" width="15" height="1.500" fill="#6b6856" opacity="0.61"/><rect x="0" y="313.70" width="7" height="1.500" fill="#c02560" opacity="0.68"/><rect x="8" y="313.70" width="10" height="1.500" fill="#4fa9bd" opacity="0.68"/><rect x="19" y="313.70" width="25" height="1.500" fill="#86b82a" opacity="0.68"/><rect x="45" y="313.70" width="3" height="1.500" fill="#c8c8c2" opacity="0.68"/><rect x="5" y="316.65" width="7" height="1.500" fill="#c02560" opacity="0.68"/><rect x="13" y="316.65" width="11" height="1.500" fill="#c8c8c2" opacity="0.68"/><rect x="24" y="316.65" width="26" height="1.500" fill="#a7a055" opacity="0.68"/><rect x="52" y="316.65" width="9" height="1.500" fill="#c8c8c2" opacity="0.68"/><rect x="0" y="319.60" width="1.5" height="1.500" fill="#c8c8c2" opacity="0.68"/><rect x="0" y="325.50" width="17" height="1.500" fill="#6b6856" opacity="0.61"/><rect x="0" y="328.45" width="7" height="1.500" fill="#c02560" opacity="0.68"/><rect x="8" y="328.45" width="10" height="1.500" fill="#4fa9bd" opacity="0.68"/><rect x="19" y="328.45" width="24" height="1.500" fill="#86b82a" opacity="0.68"/><rect x="44" y="328.45" width="3" height="1.500" fill="#c8c8c2" opacity="0.68"/><rect x="5" y="331.40" width="7" height="1.500" fill="#c02560" opacity="0.68"/><rect x="13" y="331.40" width="11" height="1.500" fill="#c8c8c2" opacity="0.68"/><rect x="24" y="331.40" width="38" height="1.500" fill="#a7a055" opacity="0.68"/><rect x="64" y="331.40" width="7" height="1.500" fill="#c8c8c2" opacity="0.68"/><rect x="0" y="334.35" width="1.5" height="1.500" fill="#c8c8c2" opacity="0.68"/><rect x="0" y="340.25" width="13" height="1.500" fill="#6b6856" opacity="0.61"/><rect x="0" y="343.20" width="7" height="1.500" fill="#c02560" opacity="0.68"/><rect x="8" y="343.20" width="10" height="1.500" fill="#4fa9bd" opacity="0.68"/><rect x="19" y="343.20" width="14" height="1.500" fill="#86b82a" opacity="0.68"/><rect x="34" y="343.20" width="3" height="1.500" fill="#c8c8c2" opacity="0.68"/><rect x="5" y="346.15" width="7" height="1.500" fill="#c02560" opacity="0.68"/><rect x="13" y="346.15" width="11" height="1.500" fill="#c8c8c2" opacity="0.68"/><rect x="24" y="346.15" width="38" height="1.500" fill="#a7a055" opacity="0.68"/><rect x="64" y="346.15" width="8" height="1.500" fill="#c8c8c2" opacity="0.68"/><rect x="0" y="349.10" width="1.5" height="1.500" fill="#c8c8c2" opacity="0.68"/><rect x="0" y="355.00" width="8" height="1.500" fill="#6b6856" opacity="0.61"/><rect x="0" y="357.95" width="7" height="1.500" fill="#c02560" opacity="0.68"/><rect x="8" y="357.95" width="10" height="1.500" fill="#4fa9bd" opacity="0.68"/><rect x="19" y="357.95" width="17" height="1.500" fill="#86b82a" opacity="0.68"/><rect x="37" y="357.95" width="3" height="1.500" fill="#c8c8c2" opacity="0.68"/><rect x="5" y="360.90" width="7" height="1.500" fill="#c02560" opacity="0.68"/><rect x="13" y="360.90" width="11" height="1.500" fill="#c8c8c2" opacity="0.68"/><rect x="24" y="360.90" width="33" height="1.500" fill="#a7a055" opacity="0.68"/><rect x="59" y="360.90" width="5" height="1.500" fill="#c8c8c2" opacity="0.68"/><rect x="0" y="363.85" width="1.5" height="1.500" fill="#c8c8c2" opacity="0.68"/><rect x="0" y="369.75" width="22" height="1.500" fill="#6b6856" opacity="0.61"/><rect x="0" y="372.70" width="7" height="1.500" fill="#c02560" opacity="0.68"/><rect x="8" y="372.70" width="10" height="1.500" fill="#4fa9bd" opacity="0.68"/><rect x="19" y="372.70" width="21" height="1.500" fill="#86b82a" opacity="0.68"/><rect x="41" y="372.70" width="3" height="1.500" fill="#c8c8c2" opacity="0.68"/><rect x="5" y="375.65" width="7" height="1.500" fill="#c02560" opacity="0.68"/><rect x="13" y="375.65" width="11" height="1.500" fill="#c8c8c2" opacity="0.68"/><rect x="24" y="375.65" width="26" height="1.500" fill="#a7a055" opacity="0.68"/><rect x="52" y="375.65" width="7" height="1.500" fill="#c8c8c2" opacity="0.68"/><rect x="0" y="378.60" width="1.5" height="1.500" fill="#c8c8c2" opacity="0.68"/><rect x="0" y="384.50" width="22" height="1.500" fill="#6b6856" opacity="0.61"/><rect x="0" y="387.45" width="7" height="1.500" fill="#c02560" opacity="0.68"/><rect x="8" y="387.45" width="10" height="1.500" fill="#4fa9bd" opacity="0.68"/><rect x="19" y="387.45" width="16" height="1.500" fill="#86b82a" opacity="0.68"/><rect x="36" y="387.45" width="3" height="1.500" fill="#c8c8c2" opacity="0.68"/><rect x="5" y="390.40" width="7" height="1.500" fill="#c02560" opacity="0.68"/><rect x="13" y="390.40" width="11" height="1.500" fill="#c8c8c2" opacity="0.68"/><rect x="24" y="390.40" width="37" height="1.500" fill="#a7a055" opacity="0.68"/><rect x="0" y="393.35" width="1.5" height="1.500" fill="#c8c8c2" opacity="0.68"/><rect x="0" y="399.25" width="14" height="1.500" fill="#6b6856" opacity="0.61"/><rect x="0" y="402.20" width="7" height="1.500" fill="#c02560" opacity="0.68"/><rect x="8" y="402.20" width="10" height="1.500" fill="#4fa9bd" opacity="0.68"/><rect x="19" y="402.20" width="19" height="1.500" fill="#86b82a" opacity="0.68"/><rect x="39" y="402.20" width="3" height="1.500" fill="#c8c8c2" opacity="0.68"/><rect x="5" y="405.15" width="7" height="1.500" fill="#c02560" opacity="0.68"/><rect x="13" y="405.15" width="11" height="1.500" fill="#c8c8c2" opacity="0.68"/><rect x="24" y="405.15" width="36" height="1.500" fill="#a7a055" opacity="0.68"/><rect x="0" y="408.10" width="1.5" height="1.500" fill="#c8c8c2" opacity="0.68"/><rect x="0" y="414.00" width="10" height="1.500" fill="#6b6856" opacity="0.61"/><rect x="0" y="416.95" width="7" height="1.500" fill="#c02560" opacity="0.68"/><rect x="8" y="416.95" width="10" height="1.500" fill="#4fa9bd" opacity="0.68"/><rect x="19" y="416.95" width="16" height="1.500" fill="#86b82a" opacity="0.68"/><rect x="36" y="416.95" width="3" height="1.500" fill="#c8c8c2" opacity="0.68"/><rect x="5" y="419.90" width="7" height="1.500" fill="#c02560" opacity="0.68"/><rect x="13" y="419.90" width="11" height="1.500" fill="#c8c8c2" opacity="0.68"/><rect x="24" y="419.90" width="31" height="1.500" fill="#a7a055" opacity="0.68"/><rect x="0" y="422.85" width="1.5" height="1.500" fill="#c8c8c2" opacity="0.68"/><rect x="0" y="428.75" width="21" height="1.500" fill="#6b6856" opacity="0.61"/><rect x="0" y="431.70" width="7" height="1.500" fill="#c02560" opacity="0.68"/><rect x="8" y="431.70" width="10" height="1.500" fill="#4fa9bd" opacity="0.68"/><rect x="19" y="431.70" width="23" height="1.500" fill="#86b82a" opacity="0.68"/><rect x="43" y="431.70" width="3" height="1.500" fill="#c8c8c2" opacity="0.68"/><rect x="5" y="434.65" width="7" height="1.500" fill="#c02560" opacity="0.68"/><rect x="13" y="434.65" width="11" height="1.500" fill="#c8c8c2" opacity="0.68"/><rect x="24" y="434.65" width="29" height="1.500" fill="#a7a055" opacity="0.68"/><rect x="55" y="434.65" width="4" height="1.500" fill="#c8c8c2" opacity="0.68"/><rect x="0" y="437.60" width="1.5" height="1.500" fill="#c8c8c2" opacity="0.68"/><rect x="0" y="443.50" width="16" height="1.500" fill="#6b6856" opacity="0.61"/><rect x="0" y="446.45" width="7" height="1.500" fill="#c02560" opacity="0.68"/><rect x="8" y="446.45" width="10" height="1.500" fill="#4fa9bd" opacity="0.68"/><rect x="19" y="446.45" width="19" height="1.500" fill="#86b82a" opacity="0.68"/><rect x="39" y="446.45" width="3" height="1.500" fill="#c8c8c2" opacity="0.68"/><rect x="5" y="449.40" width="7" height="1.500" fill="#c02560" opacity="0.68"/><rect x="13" y="449.40" width="11" height="1.500" fill="#c8c8c2" opacity="0.68"/><rect x="24" y="449.40" width="43" height="1.500" fill="#a7a055" opacity="0.68"/><rect x="69" y="449.40" width="5" height="1.500" fill="#c8c8c2" opacity="0.68"/><rect x="0" y="452.35" width="1.5" height="1.500" fill="#c8c8c2" opacity="0.68"/><rect x="0" y="458.25" width="16" height="1.500" fill="#6b6856" opacity="0.61"/><rect x="0" y="461.20" width="7" height="1.500" fill="#c02560" opacity="0.68"/><rect x="8" y="461.20" width="10" height="1.500" fill="#4fa9bd" opacity="0.68"/><rect x="19" y="461.20" width="23" height="1.500" fill="#86b82a" opacity="0.68"/><rect x="43" y="461.20" width="3" height="1.500" fill="#c8c8c2" opacity="0.68"/><rect x="5" y="464.15" width="7" height="1.500" fill="#c02560" opacity="0.68"/><rect x="13" y="464.15" width="11" height="1.500" fill="#c8c8c2" opacity="0.68"/><rect x="24" y="464.15" width="44" height="1.500" fill="#a7a055" opacity="0.68"/><rect x="0" y="467.10" width="1.5" height="1.500" fill="#c8c8c2" opacity="0.68"/><rect x="0" y="473.00" width="22" height="1.500" fill="#6b6856" opacity="0.61"/><rect x="0" y="475.95" width="7" height="1.500" fill="#c02560" opacity="0.68"/><rect x="8" y="475.95" width="10" height="1.500" fill="#4fa9bd" opacity="0.68"/><rect x="19" y="475.95" width="26" height="1.500" fill="#86b82a" opacity="0.68"/><rect x="46" y="475.95" width="3" height="1.500" fill="#c8c8c2" opacity="0.68"/><rect x="5" y="478.90" width="7" height="1.500" fill="#c02560" opacity="0.68"/><rect x="13" y="478.90" width="11" height="1.500" fill="#c8c8c2" opacity="0.68"/><rect x="24" y="478.90" width="41" height="1.500" fill="#a7a055" opacity="0.68"/><rect x="67" y="478.90" width="7" height="1.500" fill="#c8c8c2" opacity="0.68"/><rect x="0" y="481.85" width="1.5" height="1.500" fill="#c8c8c2" opacity="0.68"/><rect x="0" y="487.75" width="15" height="1.500" fill="#6b6856" opacity="0.61"/><rect x="0" y="490.70" width="7" height="1.500" fill="#c02560" opacity="0.68"/><rect x="8" y="490.70" width="10" height="1.500" fill="#4fa9bd" opacity="0.68"/><rect x="19" y="490.70" width="24" height="1.500" fill="#86b82a" opacity="0.68"/><rect x="44" y="490.70" width="3" height="1.500" fill="#c8c8c2" opacity="0.68"/><rect x="5" y="493.65" width="7" height="1.500" fill="#c02560" opacity="0.68"/><rect x="13" y="493.65" width="11" height="1.500" fill="#c8c8c2" opacity="0.68"/><rect x="24" y="493.65" width="36" height="1.500" fill="#a7a055" opacity="0.68"/><rect x="62" y="493.65" width="4" height="1.500" fill="#c8c8c2" opacity="0.68"/><rect x="0" y="496.60" width="1.5" height="1.500" fill="#c8c8c2" opacity="0.68"/><rect x="0" y="502.50" width="15" height="1.500" fill="#6b6856" opacity="0.61"/><rect x="0" y="505.45" width="7" height="1.500" fill="#c02560" opacity="0.68"/><rect x="8" y="505.45" width="10" height="1.500" fill="#4fa9bd" opacity="0.68"/><rect x="19" y="505.45" width="16" height="1.500" fill="#86b82a" opacity="0.68"/><rect x="36" y="505.45" width="3" height="1.500" fill="#c8c8c2" opacity="0.68"/><rect x="5" y="508.40" width="7" height="1.500" fill="#c02560" opacity="0.68"/><rect x="13" y="508.40" width="11" height="1.500" fill="#c8c8c2" opacity="0.68"/><rect x="24" y="508.40" width="27" height="1.500" fill="#a7a055" opacity="0.68"/><rect x="53" y="508.40" width="4" height="1.500" fill="#c8c8c2" opacity="0.68"/><rect x="0" y="511.35" width="1.5" height="1.500" fill="#c8c8c2" opacity="0.68"/><rect x="0" y="517.25" width="17" height="1.500" fill="#6b6856" opacity="0.61"/><rect x="0" y="520.20" width="7" height="1.500" fill="#c02560" opacity="0.68"/><rect x="8" y="520.20" width="10" height="1.500" fill="#4fa9bd" opacity="0.68"/><rect x="19" y="520.20" width="16" height="1.500" fill="#86b82a" opacity="0.68"/><rect x="36" y="520.20" width="3" height="1.500" fill="#c8c8c2" opacity="0.68"/><rect x="5" y="523.15" width="7" height="1.500" fill="#c02560" opacity="0.68"/><rect x="13" y="523.15" width="11" height="1.500" fill="#c8c8c2" opacity="0.68"/><rect x="24" y="523.15" width="41" height="1.500" fill="#a7a055" opacity="0.68"/><rect x="67" y="523.15" width="6" height="1.500" fill="#c8c8c2" opacity="0.68"/><rect x="0" y="526.10" width="1.5" height="1.500" fill="#c8c8c2" opacity="0.68"/><rect x="0" y="532.00" width="9" height="1.500" fill="#6b6856" opacity="0.61"/><rect x="0" y="534.95" width="7" height="1.500" fill="#c02560" opacity="0.68"/><rect x="8" y="534.95" width="10" height="1.500" fill="#4fa9bd" opacity="0.68"/><rect x="19" y="534.95" width="17" height="1.500" fill="#86b82a" opacity="0.68"/><rect x="37" y="534.95" width="3" height="1.500" fill="#c8c8c2" opacity="0.68"/><rect x="5" y="537.90" width="7" height="1.500" fill="#c02560" opacity="0.68"/><rect x="13" y="537.90" width="11" height="1.500" fill="#c8c8c2" opacity="0.68"/><rect x="24" y="537.90" width="43" height="1.500" fill="#a7a055" opacity="0.68"/><rect x="69" y="537.90" width="9" height="1.500" fill="#c8c8c2" opacity="0.68"/><rect x="0" y="540.85" width="1.5" height="1.500" fill="#c8c8c2" opacity="0.68"/><rect x="0" y="546.75" width="13" height="1.500" fill="#6b6856" opacity="0.61"/><rect x="0" y="549.70" width="7" height="1.500" fill="#c02560" opacity="0.68"/><rect x="8" y="549.70" width="10" height="1.500" fill="#4fa9bd" opacity="0.68"/><rect x="19" y="549.70" width="23" height="1.500" fill="#86b82a" opacity="0.68"/><rect x="43" y="549.70" width="3" height="1.500" fill="#c8c8c2" opacity="0.68"/><rect x="5" y="552.65" width="7" height="1.500" fill="#c02560" opacity="0.68"/><rect x="13" y="552.65" width="11" height="1.500" fill="#c8c8c2" opacity="0.68"/><rect x="24" y="552.65" width="35" height="1.500" fill="#a7a055" opacity="0.68"/><rect x="61" y="552.65" width="4" height="1.500" fill="#c8c8c2" opacity="0.68"/><rect x="0" y="555.60" width="1.5" height="1.500" fill="#c8c8c2" opacity="0.68"/><rect x="0" y="561.50" width="15" height="1.500" fill="#6b6856" opacity="0.61"/><rect x="0" y="564.45" width="7" height="1.500" fill="#c02560" opacity="0.68"/><rect x="8" y="564.45" width="10" height="1.500" fill="#4fa9bd" opacity="0.68"/><rect x="19" y="564.45" width="21" height="1.500" fill="#86b82a" opacity="0.68"/><rect x="41" y="564.45" width="3" height="1.500" fill="#c8c8c2" opacity="0.68"/><rect x="5" y="567.40" width="7" height="1.500" fill="#c02560" opacity="0.68"/><rect x="13" y="567.40" width="11" height="1.500" fill="#c8c8c2" opacity="0.68"/><rect x="24" y="567.40" width="39" height="1.500" fill="#a7a055" opacity="0.68"/><rect x="65" y="567.40" width="5" height="1.500" fill="#c8c8c2" opacity="0.68"/><rect x="0" y="570.35" width="1.5" height="1.500" fill="#c8c8c2" opacity="0.68"/><rect x="0" y="576.25" width="13" height="1.500" fill="#6b6856" opacity="0.61"/><rect x="0" y="579.20" width="7" height="1.500" fill="#c02560" opacity="0.68"/><rect x="8" y="579.20" width="10" height="1.500" fill="#4fa9bd" opacity="0.68"/><rect x="19" y="579.20" width="25" height="1.500" fill="#86b82a" opacity="0.68"/><rect x="45" y="579.20" width="3" height="1.500" fill="#c8c8c2" opacity="0.68"/><rect x="5" y="582.15" width="7" height="1.500" fill="#c02560" opacity="0.68"/><rect x="13" y="582.15" width="11" height="1.500" fill="#c8c8c2" opacity="0.68"/><rect x="24" y="582.15" width="32" height="1.500" fill="#a7a055" opacity="0.68"/><rect x="58" y="582.15" width="9" height="1.500" fill="#c8c8c2" opacity="0.68"/><rect x="0" y="585.10" width="1.5" height="1.500" fill="#c8c8c2" opacity="0.68"/><rect x="0" y="591.00" width="8" height="1.500" fill="#6b6856" opacity="0.61"/><rect x="0" y="593.95" width="7" height="1.500" fill="#c02560" opacity="0.68"/><rect x="8" y="593.95" width="10" height="1.500" fill="#4fa9bd" opacity="0.68"/><rect x="19" y="593.95" width="17" height="1.500" fill="#86b82a" opacity="0.68"/><rect x="37" y="593.95" width="3" height="1.500" fill="#c8c8c2" opacity="0.68"/><rect x="5" y="596.90" width="7" height="1.500" fill="#c02560" opacity="0.68"/><rect x="13" y="596.90" width="11" height="1.500" fill="#c8c8c2" opacity="0.68"/><rect x="24" y="596.90" width="40" height="1.500" fill="#a7a055" opacity="0.68"/><rect x="66" y="596.90" width="9" height="1.500" fill="#c8c8c2" opacity="0.68"/><rect x="0" y="599.85" width="1.5" height="1.500" fill="#c8c8c2" opacity="0.68"/><rect x="0" y="605.75" width="8" height="1.500" fill="#6b6856" opacity="0.61"/><rect x="0" y="608.70" width="7" height="1.500" fill="#c02560" opacity="0.68"/><rect x="8" y="608.70" width="10" height="1.500" fill="#4fa9bd" opacity="0.68"/><rect x="19" y="608.70" width="26" height="1.500" fill="#86b82a" opacity="0.68"/><rect x="46" y="608.70" width="3" height="1.500" fill="#c8c8c2" opacity="0.68"/><rect x="5" y="611.65" width="7" height="1.500" fill="#c02560" opacity="0.68"/><rect x="13" y="611.65" width="11" height="1.500" fill="#c8c8c2" opacity="0.68"/><rect x="24" y="611.65" width="40" height="1.500" fill="#a7a055" opacity="0.68"/><rect x="66" y="611.65" width="9" height="1.500" fill="#c8c8c2" opacity="0.68"/><rect x="0" y="614.60" width="1.5" height="1.500" fill="#c8c8c2" opacity="0.68"/><rect x="0" y="620.50" width="19" height="1.500" fill="#6b6856" opacity="0.61"/><rect x="0" y="623.45" width="7" height="1.500" fill="#c02560" opacity="0.68"/><rect x="8" y="623.45" width="10" height="1.500" fill="#4fa9bd" opacity="0.68"/><rect x="19" y="623.45" width="18" height="1.500" fill="#86b82a" opacity="0.68"/><rect x="38" y="623.45" width="3" height="1.500" fill="#c8c8c2" opacity="0.68"/><rect x="5" y="626.40" width="7" height="1.500" fill="#c02560" opacity="0.68"/><rect x="13" y="626.40" width="11" height="1.500" fill="#c8c8c2" opacity="0.68"/><rect x="24" y="626.40" width="40" height="1.500" fill="#a7a055" opacity="0.68"/><rect x="66" y="626.40" width="5" height="1.500" fill="#c8c8c2" opacity="0.68"/><rect x="0" y="629.35" width="1.5" height="1.500" fill="#c8c8c2" opacity="0.68"/><rect x="0" y="635.25" width="11" height="1.500" fill="#6b6856" opacity="0.61"/><rect x="0" y="638.20" width="7" height="1.500" fill="#c02560" opacity="0.68"/><rect x="8" y="638.20" width="10" height="1.500" fill="#4fa9bd" opacity="0.68"/><rect x="19" y="638.20" width="22" height="1.500" fill="#86b82a" opacity="0.68"/><rect x="42" y="638.20" width="3" height="1.500" fill="#c8c8c2" opacity="0.68"/><rect x="5" y="641.15" width="7" height="1.500" fill="#c02560" opacity="0.68"/><rect x="13" y="641.15" width="11" height="1.500" fill="#c8c8c2" opacity="0.68"/><rect x="24" y="641.15" width="41" height="1.500" fill="#a7a055" opacity="0.68"/><rect x="0" y="644.10" width="1.5" height="1.500" fill="#c8c8c2" opacity="0.68"/><rect x="0" y="650.00" width="11" height="1.500" fill="#6b6856" opacity="0.61"/><rect x="0" y="652.95" width="7" height="1.500" fill="#c02560" opacity="0.68"/><rect x="8" y="652.95" width="10" height="1.500" fill="#4fa9bd" opacity="0.68"/><rect x="19" y="652.95" width="23" height="1.500" fill="#86b82a" opacity="0.68"/><rect x="43" y="652.95" width="3" height="1.500" fill="#c8c8c2" opacity="0.68"/><rect x="5" y="655.90" width="7" height="1.500" fill="#c02560" opacity="0.68"/><rect x="13" y="655.90" width="11" height="1.500" fill="#c8c8c2" opacity="0.68"/><rect x="24" y="655.90" width="30" height="1.500" fill="#a7a055" opacity="0.68"/><rect x="0" y="658.85" width="1.5" height="1.500" fill="#c8c8c2" opacity="0.68"/><rect x="0" y="664.75" width="19" height="1.500" fill="#6b6856" opacity="0.61"/><rect x="0" y="667.70" width="7" height="1.500" fill="#c02560" opacity="0.68"/><rect x="8" y="667.70" width="10" height="1.500" fill="#4fa9bd" opacity="0.68"/><rect x="19" y="667.70" width="26" height="1.500" fill="#86b82a" opacity="0.68"/><rect x="46" y="667.70" width="3" height="1.500" fill="#c8c8c2" opacity="0.68"/><rect x="5" y="670.65" width="7" height="1.500" fill="#c02560" opacity="0.68"/><rect x="13" y="670.65" width="11" height="1.500" fill="#c8c8c2" opacity="0.68"/><rect x="24" y="670.65" width="31" height="1.500" fill="#a7a055" opacity="0.68"/><rect x="57" y="670.65" width="7" height="1.500" fill="#c8c8c2" opacity="0.68"/><rect x="0" y="673.60" width="1.5" height="1.500" fill="#c8c8c2" opacity="0.68"/><rect x="0" y="679.50" width="8" height="1.500" fill="#6b6856" opacity="0.61"/><rect x="0" y="682.45" width="7" height="1.500" fill="#c02560" opacity="0.68"/><rect x="8" y="682.45" width="10" height="1.500" fill="#4fa9bd" opacity="0.68"/><rect x="19" y="682.45" width="14" height="1.500" fill="#86b82a" opacity="0.68"/><rect x="34" y="682.45" width="3" height="1.500" fill="#c8c8c2" opacity="0.68"/><rect x="5" y="685.40" width="7" height="1.500" fill="#c02560" opacity="0.68"/><rect x="13" y="685.40" width="11" height="1.500" fill="#c8c8c2" opacity="0.68"/><rect x="24" y="685.40" width="32" height="1.500" fill="#a7a055" opacity="0.68"/><rect x="58" y="685.40" width="5" height="1.500" fill="#c8c8c2" opacity="0.68"/><rect x="0" y="688.35" width="1.5" height="1.500" fill="#c8c8c2" opacity="0.68"/></svg><div class="abs" style="left:760px;top:4px;width:8px;height:49px;background:#686964"></div></div>
<div id="browser"><div id="btabs"><div class="abs" style="left:0;top:0;width:111px;height:32px;background:#272822"></div><span class="abs" style="left:11px;top:7px;font-size:13px;line-height:17px;color:#dcdcd6;white-space:nowrap">Web<span class="z12">浏览器</span></span><svg class="abs" style="left:87px;top:11px" width="10" height="10" viewBox="0 0 10 10" stroke="#d0d0ca" stroke-width="1.100" fill="none"><path d="M1 1l8 8M9 1l-8 8"/></svg></div><div class="abs" style="left:7px;top:36px;width:371px;height:27px;border:1px solid #5c5d57;background:#282923;overflow:hidden"><span class="abs" style="left:7px;top:4px;font-size:13.500px;line-height:17px;color:#bdbdb7;white-space:nowrap">http://localhost:8080/mobile/bundle/pages/bargain_process/l</span></div><div class="abs" style="left:7px;top:68px;width:118px;height:26px;border:1px solid #1c1d19;background:#252620"><span class="abs" style="left:5px;top:4px;font-size:12.500px;line-height:17px;color:#a9a9a3">PC<span class="z12">模式</span></span><svg class="abs" style="left:106px;top:10px" width="7" height="4" viewBox="0 0 8 5"><path d="M0 0h8L4 5z" fill="#c4c4be"/></svg></div><svg class="abs" style="left:136px;top:73px" width="16" height="16" viewBox="0 0 16 16" fill="none" stroke="#e8e8e2" stroke-width="1.300"><path d="M5.500 3.500H14v10.500H2.500V7"/><path d="M1.500 2l6.500 6.500M1.500 6V2h4"/></svg><svg class="abs" style="left:166px;top:73px" width="16" height="16" viewBox="0 0 16 16" fill="none" stroke="#e8e8e2" stroke-width="1.300"><circle cx="8" cy="8" r="2.300"/><path d="M6.600 1.500h2.800l.4 1.700 1.500.9 1.700-.6 1.400 2.400-1.300 1.200v1.800l1.300 1.200-1.400 2.400-1.700-.6-1.500.9-.4 1.700H6.600l-.4-1.700-1.500-.9-1.700.6-1.400-2.400 1.300-1.200V7.100L1.600 5.900 3 3.500l1.700.6 1.500-.9z" stroke-linejoin="round"/></svg><svg class="abs" style="left:197px;top:73px" width="16" height="16" viewBox="0 0 16 16" fill="none" stroke="#e8e8e2" stroke-width="1.300"><rect x="1.500" y="2.500" width="13" height="11"/><path d="M4.500 5.500l2.500 2.500-2.500 2.500M8.500 10.500h3.500"/></svg><svg class="abs" style="left:227px;top:73px" width="16" height="16" viewBox="0 0 16 16" fill="none" stroke="#f4f4ee" stroke-width="2"><path d="M14.500 8H2.500M7 3.500L2.500 8 7 12.500"/></svg><svg class="abs" style="left:256px;top:73px" width="16" height="16" viewBox="0 0 16 16" fill="none" stroke="#f4f4ee" stroke-width="2"><path d="M1.500 8H13.500M9 3.500L13.500 8 9 12.500"/></svg><svg class="abs" style="left:287px;top:74px" width="14" height="14" viewBox="0 0 16 16" fill="none" stroke="#e8e8e2" stroke-width="1.300"><path d="M13 5A6 6 0 1 0 14 9.500"/><path d="M13.800 1.500V5.300H10"/></svg><svg class="abs" style="left:317px;top:73px" width="15" height="15" viewBox="0 0 16 16" fill="none" stroke="#e8e8e2" stroke-width="1.300"><rect x="3" y="7.500" width="10" height="7"/><path d="M5 7.500V5a3 3 0 0 1 5.800-1"/></svg><svg class="abs" style="left:347px;top:74px" width="14" height="14" viewBox="0 0 16 16" fill="none" stroke="#ecece6" stroke-width="1.700"><rect x="2" y="2" width="4.500" height="4.500"/><rect x="9.500" y="2" width="4.500" height="4.500"/><rect x="2" y="9.500" width="4.500" height="4.500"/><path d="M9 10h2.200M13.500 9.500v1M9.500 13.500h0.800M12 14h2.200v-1.500" stroke-width="1.500"/></svg><div id="web"><div class="abs" style="left:0;top:0;width:385px;height:45px;background:#fff"></div><div class="abs" style="left:12px;top:7px;width:84px;height:32px;border:1px solid #e6e6e6;border-radius:16px;background:#fff"></div><svg class="abs" style="left:27px;top:15px" width="11" height="16" viewBox="0 0 11 16" fill="none" stroke="#111" stroke-width="1.800"><path d="M9 1.500L2.500 8 9 14.500"/></svg><div class="abs" style="left:54px;top:14px;width:1px;height:18px;background:#e2e2e2"></div><svg class="abs" style="left:68px;top:16px" width="15" height="14" viewBox="0 0 15 14" stroke="#111" stroke-width="1.700"><path d="M0 1.500h15M0 7h15M0 12.500h15"/></svg><div class="abs" style="left:96px;top:11px;width:192px;text-align:center;font-size:16px;line-height:24px;font-weight:bold;color:#111">砍价进度</div><div class="abs" style="left:0;top:45px;width:385px;height:216px;overflow:hidden"><div class="abs" style="left:-42px;top:0;width:462px;height:216px;border-radius:0 0 50% 50%;overflow:hidden;background:linear-gradient(98deg,#f6472f 12%,#fa582b 40%,#fc6b27 72%,#fd6a22 100%)"><div class="abs" style="left:-70px;top:-60px;width:200px;height:260px;border-radius:50%;background:rgba(250,110,95,.16)"></div><div class="abs" style="left:310px;top:15px;width:320px;height:320px;border-radius:50%;background:#fd4415"></div></div></div><div class="abs" style="left:12px;top:71px;font-size:18px;line-height:24px;color:#fdeee9;white-space:nowrap">您正在发起砍价</div><div class="abs" style="left:12px;top:101px;font-size:12px;line-height:16px;font-weight:bold;color:#fdeee9;white-space:nowrap;letter-spacing:.05px">邀请好友帮忙砍价，砍至100.00即可发货</div><div class="abs" style="left:12px;top:143px;width:360px;height:122px;background:#fff;border-radius:10px;box-shadow:0 1px 5px rgba(0,0,0,.05)"><svg class="abs" style="left:12px;top:15px" width="92" height="92" viewBox="0 0 92 92"><defs><clipPath id="pc"><rect width="92" height="92" rx="4.500"/></clipPath><linearGradient id="gold" x1="0" y1="0" x2="1" y2="0.300"><stop offset="0" stop-color="#f1e3b9"/><stop offset=".5" stop-color="#d2b97f"/><stop offset="1" stop-color="#8d7a55"/></linearGradient><linearGradient id="silv" x1="0" y1="0" x2="1" y2="0.200"><stop offset="0" stop-color="#f2f2f2"/><stop offset=".45" stop-color="#cfcfd2"/><stop offset="1" stop-color="#77777c"/></linearGradient></defs><g clip-path="url(#pc)"><rect width="92" height="92" fill="#e31647"/><rect x="1.500" y="1.500" width="89" height="80" fill="#0b0809"/><path d="M15.300 3.800L37.700 30l2.700 14 6 24 2.200 12.500-20.600 2L12 46.500l6-3.500z" fill="url(#gold)"/><path d="M19 12l17 19.500 2.500 13L44 68l2 12-12.500 1.200L23.500 52 21 43z" fill="url(#silv)"/><path d="M12 46.500l6-3.500 3 9-4.500 3.500z" fill="#e9d8a8"/><path d="M17 7l13 34" stroke="#6d6d70" stroke-width=".5" fill="none"/><path d="M24 24l10 8M25 30l11 9M27 48l12 3M29 56l12 4M31 64l12 3" stroke="#9b9ba0" stroke-width=".7" fill="none" opacity=".7"/><circle cx="30" cy="41.500" r="1.400" fill="#111"/><rect x="67" y="1" width="24" height="12.500" fill="#e5174a"/><rect x="75" y="3" width="8" height="2.200" fill="#f6a9bb"/><rect x="70" y="7.500" width="18" height="3" fill="#f28aa3"/><text x="50.500" y="44.300" font-family="Liberation Sans,sans-serif" font-size="4.600" fill="#bdbdbd" textLength="35" lengthAdjust="spacingAndGlyphs">CUSTOM urushi</text><text x="59" y="52.600" font-family="Liberation Sans,sans-serif" font-size="2.400" fill="#8a8a8a" textLength="18" lengthAdjust="spacingAndGlyphs">- FKV-88SR -</text><rect x="0" y="79.500" width="92" height="12.500" fill="#e9194d"/><rect x="3" y="84" width="13" height="3" fill="#f26a8c"/><rect x="43" y="80.800" width="33" height="2.600" fill="#cfb58a"/><rect x="37.500" y="85.500" width="36" height="4.800" fill="#f59bb0" opacity=".85"/><rect x="77.500" y="78.500" width="8.500" height="12.500" fill="#d9d6d2"/><rect x="79" y="80" width="5.500" height="4" fill="#9fa4aa"/><rect x="86" y="84" width="4" height="7" fill="#9a5a3c"/></g></svg><div class="abs" style="left:116px;top:21px;width:240px;font-size:14px;line-height:20.500px;color:#333;white-space:nowrap;overflow:hidden">日本进口pilot百乐贵客钢笔 硬橡胶生<br>漆18k金笔fkv-88sr莳绘30号金尖限…</div><div class="abs" style="left:116px;top:61px;white-space:nowrap;color:#ef7a66;font-size:12px;line-height:24px">最低可砍至¥<span style="font-size:17px">100.00</span></div><div class="abs" style="left:116px;top:86px;white-space:nowrap;color:#999;font-size:12px;line-height:18px">原价<span style="text-decoration:line-through">¥6860.00</span></div></div><div class="abs" style="left:12px;top:286px;font-size:17px;line-height:24px;color:#3a3a3a;font-weight:300;white-space:nowrap">请选择商品规格</div><div class="abs" style="left:12px;top:323px;width:360px;height:49px;background:#fff;border-radius:8px"><span class="abs" style="left:10px;top:17px;font-size:13px;line-height:18px;color:#999;white-space:nowrap">已选：</span><span class="abs" style="left:48px;top:16px;font-size:15px;line-height:20px;color:#333;white-space:nowrap">默认</span><svg class="abs" style="left:339px;top:19px" width="8" height="12" viewBox="0 0 8 12" fill="none" stroke="#999" stroke-width="1.300"><path d="M1.500 1l5 5-5 5"/></svg></div><div class="abs" style="left:12px;top:393px;width:360px;height:43px;border-radius:22px;background:#ff2c3c;box-shadow:0 3px 6px rgba(255,44,60,.35);text-align:center;font-size:14px;line-height:43px;color:#fff;font-weight:500">发起砍价</div><div class="abs" style="left:8px;top:734px;width:380px;height:74px;border-radius:6px;background:#4b4b4b;box-shadow:0 0 6px rgba(0,0,0,.5)"><svg class="abs" style="left:21px;top:22px" width="20" height="20" viewBox="-10 -10 20 20"><rect x="-10" y="-10" width="20" height="20" fill="#333"/><rect x="-0.900" y="-8.500" width="1.800" height="4.500" rx=".9" fill="#fff" opacity="0.35" transform="rotate(0)"/><rect x="-0.900" y="-8.500" width="1.800" height="4.500" rx=".9" fill="#fff" opacity="0.41" transform="rotate(30)"/><rect x="-0.900" y="-8.500" width="1.800" height="4.500" rx=".9" fill="#fff" opacity="0.47" transform="rotate(60)"/><rect x="-0.900" y="-8.500" width="1.800" height="4.500" rx=".9" fill="#fff" opacity="0.53" transform="rotate(90)"/><rect x="-0.900" y="-8.500" width="1.800" height="4.500" rx=".9" fill="#fff" opacity="0.59" transform="rotate(120)"/><rect x="-0.900" y="-8.500" width="1.800" height="4.500" rx=".9" fill="#fff" opacity="0.65" transform="rotate(150)"/><rect x="-0.900" y="-8.500" width="1.800" height="4.500" rx=".9" fill="#fff" opacity="0.70" transform="rotate(180)"/><rect x="-0.900" y="-8.500" width="1.800" height="4.500" rx=".9" fill="#fff" opacity="0.76" transform="rotate(210)"/><rect x="-0.900" y="-8.500" width="1.800" height="4.500" rx=".9" fill="#fff" opacity="0.82" transform="rotate(240)"/><rect x="-0.900" y="-8.500" width="1.800" height="4.500" rx=".9" fill="#fff" opacity="0.88" transform="rotate(270)"/><rect x="-0.900" y="-8.500" width="1.800" height="4.500" rx=".9" fill="#fff" opacity="0.94" transform="rotate(300)"/><rect x="-0.900" y="-8.500" width="1.800" height="4.500" rx=".9" fill="#fff" opacity="1.00" transform="rotate(330)"/></svg><span class="abs" style="left:47px;top:22px;font-size:14px;line-height:20px;color:#fff;white-space:nowrap">正在下载第(26/28)个插件...</span><svg class="abs" style="left:354px;top:28px" width="14" height="9" viewBox="0 0 14 9" fill="none" stroke="#d8d8d8" stroke-width="1.300"><path d="M1 1l6 6 6-6"/></svg></div></div></div>
<div id="console"><span class="abs" style="left:23px;top:24px;font-size:14px;line-height:17px;color:#f4f4ee;white-space:nowrap">uniapp - Web</span><div class="abs" style="left:18px;top:47px;width:113px;height:1px;background:#e0e0da"></div><svg class="abs" style="left:954px;top:24.5px" width="14" height="15" viewBox="0 0 14 15" fill="none" stroke="#c9c9c3" stroke-width="1.200"><ellipse cx="7" cy="8.500" rx="3.300" ry="4.500"/><path d="M7 4v9M4.500 4C4.500 1.500 9.500 1.500 9.500 4M3.700 6.500L1.500 5.500M3.700 9H1M3.700 11.500L1.500 13M10.300 6.500l2.200-1M10.300 9H13M10.300 11.500l2.200 1.500"/></svg><svg class="abs" style="left:984px;top:24.5px" width="15" height="15" viewBox="0 0 15 15" fill="none" stroke="#c9c9c3" stroke-width="1.200"><path d="M3.500 3A6 6 0 1 1 1.500 7.500"/><path d="M1 1.500l2.500 1.700-1.700 2.300" /><path d="M6 5v5l4-2.500z" fill="#c9c9c3" stroke="none"/></svg><svg class="abs" style="left:1014px;top:24.5px" width="14" height="15" viewBox="0 0 14 15" fill="none" stroke="#c9c9c3" stroke-width="1.200"><rect x="1.500" y="2" width="11.500" height="11.500"/><rect x="3.200" y="3.700" width="8.100" height="8.100" fill="#dcdcd6" stroke="none"/></svg><svg class="abs" style="left:1044px;top:24.5px" width="15" height="15" viewBox="0 0 15 15" fill="none" stroke="#c9c9c3" stroke-width="1.200"><path d="M9 2H1v11.500h12V7"/><path d="M3.500 5.500l2.200 2-2.200 2M7 10.500h3M12 0v5M9.500 2.500h5"/></svg><svg class="abs" style="left:1074px;top:24.5px" width="14" height="15" viewBox="0 0 14 15" fill="none" stroke="#c9c9c3" stroke-width="1.200" stroke-width="1.400"><path d="M1 10.500l6-6 6 6"/></svg><svg class="abs" style="left:1103px;top:24.5px" width="16" height="15" viewBox="0 0 16 15" fill="none" stroke="#c9c9c3" stroke-width="1.200"><path d="M1 3l6.500 9M7.500 3L1 12M12 2.500v10M9.500 10l2.500 2.500 2.500-2.500"/></svg><div class="log" style="top:65px"><span class="tm">13:56:34.251</span> {app_agreement: , center_setting: , index_setting: , navigation_menu: , navigation_setting: , <a>...</a>} <a>at pages</a></div><div class="log" style="top:85px"><a>/index/index.vue:381</a></div><div class="log" style="top:105px"><span class="tm">13:56:41.645</span> <span class="u">undefined</span> 1 option <a>at bundle/pages/bargain_process/bargain_process.vue:321</a></div><div class="log" style="top:125px"><span class="tm">13:56:41.660</span> spec <a>at components/spec-popup/spec-popup.vue:287</a></div><div class="log" style="top:145px"><span class="tm">13:56:41.921</span> [ { <a>...</a> } ] ----- <a>at components/spec-popup/spec-popup.vue:267</a></div></div>
<div id="status"><svg class="abs" style="left:29px;top:4.500px" width="15" height="15" viewBox="0 0 15 15"><circle cx="7.500" cy="7.500" r="6.800" fill="none" stroke="#c4c4c4" stroke-width="1.100"/><circle cx="7.500" cy="5.800" r="2.500" fill="#c4c4c4"/><path d="M2.800 12c.7-3 2.700-3.600 4.700-3.600s4 .6 4.700 3.600a6.500 6.500 0 0 1-9.400 0z" fill="#c4c4c4"/></svg><span style="left:49px;top:4px;font-size:12.750px">1735031199@qq.com</span><svg class="abs" style="left:234px;top:6px" width="13" height="11" viewBox="0 0 13 11" stroke="#d4d4d4" stroke-width="1.200" fill="none"><path d="M0 1.500h2.500M4.500 1.500H13M0 5.500h2.500M4.500 5.500H13M0 9.500h2.500M4.500 9.500H13"/></svg><svg class="abs" style="left:259px;top:5px" width="14" height="13" viewBox="0 0 14 13" stroke="#d4d4d4" stroke-width="1.100" fill="none"><rect x=".6" y=".6" width="12.800" height="11.400"/><path d="M3 3.500l2.500 2.300L3 8.200M6.500 9h3.500"/></svg><span style="left:1104px;font-size:12px">语法提示库</span><span style="left:1190px;font-size:12.500px">行:21</span><span style="left:1229px;font-size:12.500px">列:28</span><span style="left:1284px;font-size:12.500px">UTF-8</span><span style="left:1344px;font-size:12.500px">JavaScript</span><svg class="abs" style="left:1420px;top:5px" width="15" height="16" viewBox="0 0 15 16"><circle cx="7" cy="7" r="6.500" fill="#eee"/><path d="M9 11l4.500 4V10z" fill="#eee"/><path d="M4.800 4v3.500c0 1 .6 1.500 1.500 1.500h1.400c.9 0 1.500-.5 1.500-1.500V4" fill="none" stroke="#4b4b4b" stroke-width="1.400"/></svg><svg class="abs" style="left:1449px;top:4px" width="17" height="17" viewBox="0 0 17 17"><circle cx="7.500" cy="9.500" r="6.500" fill="#f2f2f2"/><path d="M7.500 5.500v7M4.800 10l2.700 2.700L10.200 10" stroke="#4b4b4b" stroke-width="1.500" fill="none"/><circle cx="13.500" cy="3.500" r="3" fill="#e8503a"/></svg><svg class="abs" style="left:1480px;top:6px" width="12" height="14" viewBox="0 0 14 16"><path d="M7 1c3 0 4.500 2.200 4.500 5v3.500l1.800 2.500H.7L2.500 9.500V6C2.500 3.200 4 1 7 1z" fill="#2f9f58"/><path d="M5.200 13.500h3.600a1.800 1.800 0 0 1-3.600 0z" fill="#2f9f58"/></svg></div>
<div class="abs" style="left:0;top:0;width:1519px;height:1px;background:linear-gradient(90deg,#d9c58a 0,#a7b7b9 3%,#9fb1b6 60%,#b3b3c2 92%,#9ec3dc 100%)"></div><div class="abs" style="left:0;top:0;width:1px;height:1007px;background:linear-gradient(180deg,#d9c58a 0,#8fa3b5 4%,#7d8fa6 50%,#c9c9cf 96%,#e8e8e8 100%)"></div><div class="abs" style="left:1px;top:0;width:1px;height:1007px;background:rgba(125,143,166,.35)"></div><div class="abs" style="left:1518px;top:0;width:1px;height:1007px;background:#5d7d97"></div><div class="abs" style="left:0;top:1005px;width:1519px;height:2px;background:linear-gradient(180deg,#7e8487 0,#7e8487 50%,#b2babd 50%,#b2babd 100%)"></div><svg class="abs" style="left:0;top:0" width="8" height="8" viewBox="0 0 8 8"><path d="M0 0h8A7 7 0 0 0 1 8H0z" fill="#d9c58a"/></svg><svg class="abs" style="left:1511px;top:0" width="8" height="8" viewBox="0 0 8 8"><path d="M8 0H0A7 7 0 0 1 7 8h1z" fill="#9ec3dc"/></svg></body></html>
